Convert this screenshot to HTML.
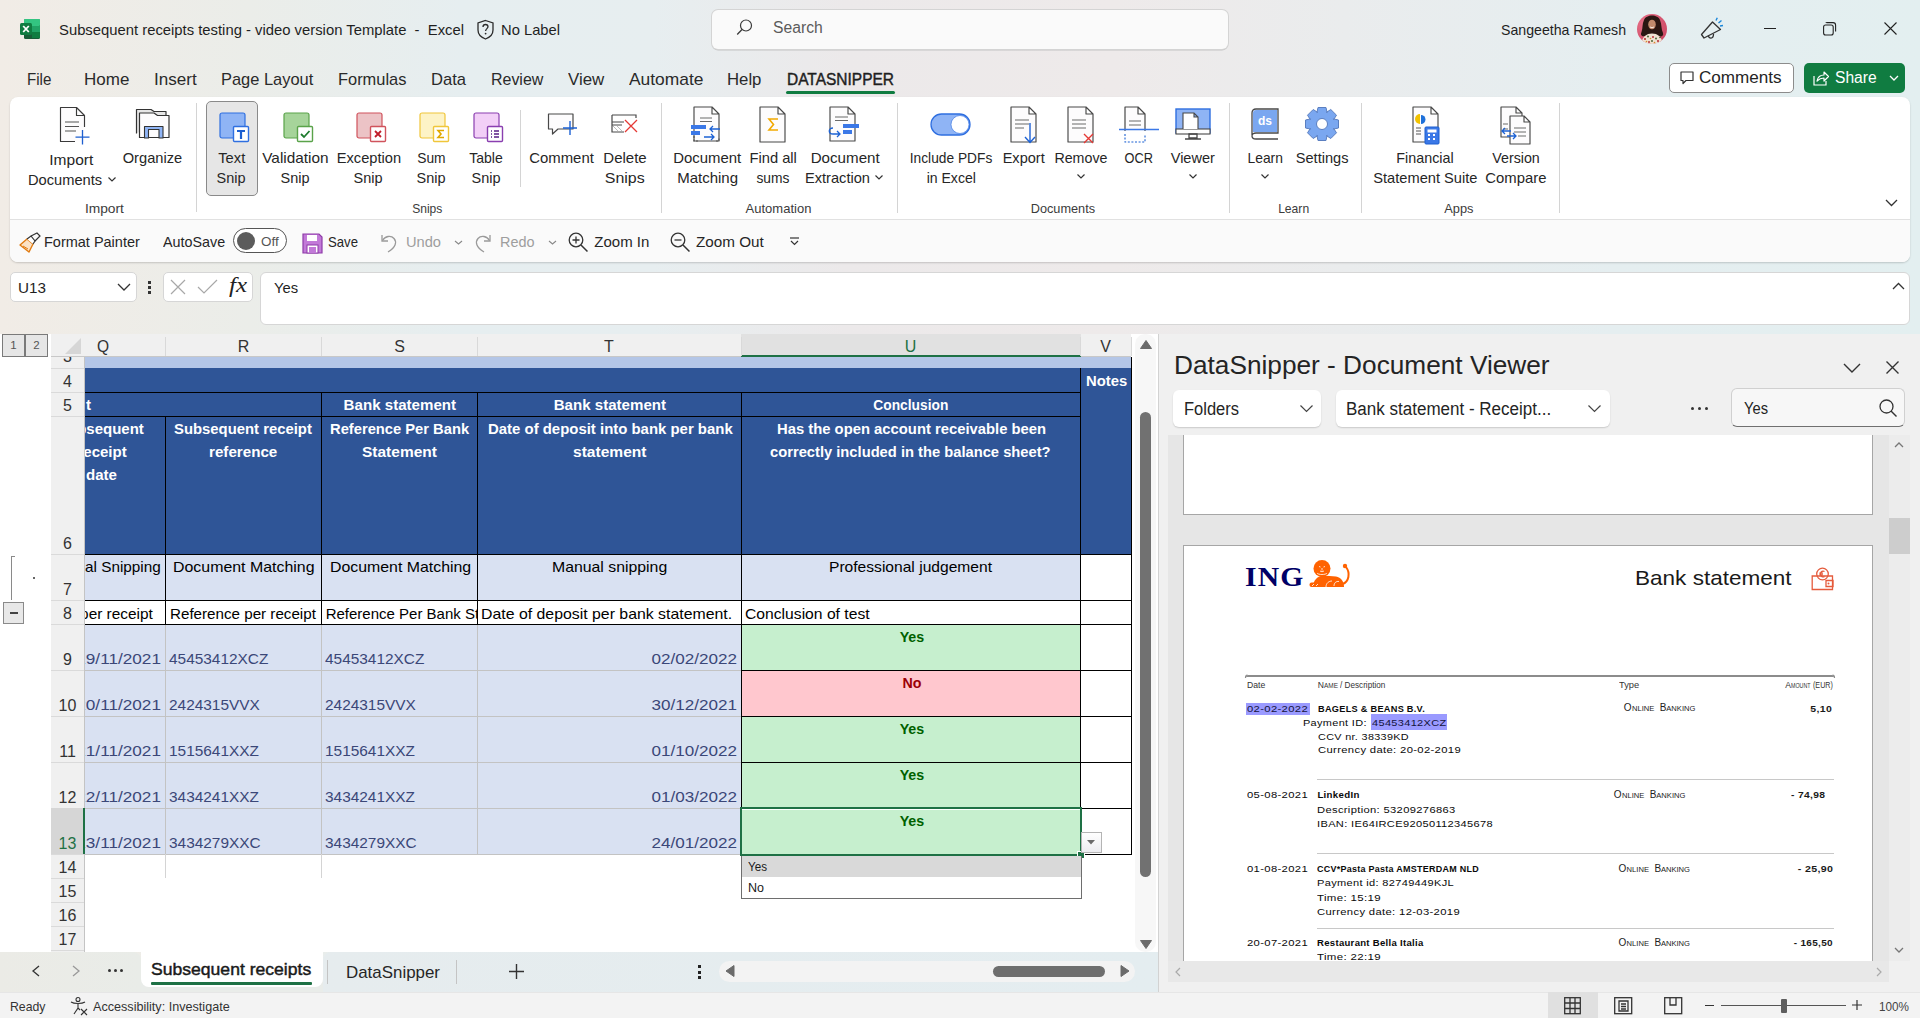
<!DOCTYPE html><html><head><meta charset="utf-8"><style>
html,body{margin:0;padding:0;width:1920px;height:1018px;overflow:hidden;background:#ebebeb;}
body{position:relative;font-family:"Liberation Sans",sans-serif;}
svg{overflow:visible}
</style></head><body>
<div style="position:absolute;left:0px;top:0px;width:1920px;height:1018px;background:linear-gradient(90deg,#f1ece6 0%,#ebede9 13%,#e6eef0 24%,#e7eef0 34%,#ece9ea 44%,#eeeaea 58%,#eaeced 70%,#e5eef0 84%,#e3eff0 100%);"></div>
<svg style="position:absolute;left:19px;top:18px;" width="23" height="23" viewBox="0 0 23 23">
<rect x="5" y="1" width="16" height="20" rx="1.5" fill="#185c37"/>
<rect x="5" y="1" width="16" height="7" rx="1" fill="#33c481"/>
<rect x="13" y="8" width="8" height="6" fill="#21a366"/>
<rect x="13" y="14" width="8" height="6" fill="#107c41"/>
<rect x="1" y="5" width="12" height="12" rx="1.5" fill="#107c41"/>
<path d="M4.2 8 L9.8 14 M9.8 8 L4.2 14" stroke="#fff" stroke-width="1.8"/>
</svg>
<div style="position:absolute;left:59.00px;top:22.30px;line-height:1;white-space:pre;color:#1f1f1f;font-family:'Liberation Sans', sans-serif;font-size:15px;font-weight:400;letter-spacing:0px;transform:scaleX(0.9880);transform-origin:left 0;">Subsequent receipts testing - video version Template  -  Excel</div>
<svg style="position:absolute;left:476px;top:19px;" width="19" height="21" viewBox="0 0 19 21"><path d="M9.5 1.5 L17 4 V11 C17 15.5 13.5 18.5 9.5 20 C5.5 18.5 2 15.5 2 11 V4 Z" fill="none" stroke="#2b2b2b" stroke-width="1.3"/>
<path d="M7 8 C7 6.3 8.2 5.5 9.5 5.5 C10.8 5.5 12 6.3 12 7.8 C12 9.5 9.6 9.8 9.6 12" fill="none" stroke="#2b2b2b" stroke-width="1.3"/><circle cx="9.6" cy="14.6" r="0.9" fill="#2b2b2b"/></svg>
<div style="position:absolute;left:500.50px;top:22.30px;line-height:1;white-space:pre;color:#1f1f1f;font-family:'Liberation Sans', sans-serif;font-size:15px;font-weight:400;letter-spacing:0px;transform:scaleX(0.9826);transform-origin:left 0;">No Label</div>
<div style="position:absolute;left:712px;top:10px;width:516px;height:39px;background:#fafafa;border-radius:6px;box-shadow:0 0 0 1px #d4d4d4, 0 1.5px 0 0 #c4c4c4;"></div>
<svg style="position:absolute;left:736px;top:19px;" width="16" height="19" viewBox="0 0 16 19"><circle cx="10" cy="6.5" r="5.5" fill="none" stroke="#3a3a3a" stroke-width="1.2"/><path d="M6 10.5 L1.2 15.5" stroke="#3a3a3a" stroke-width="1.3"/></svg>
<div style="position:absolute;left:772.70px;top:20.46px;line-height:1;white-space:pre;color:#5b5b5b;font-family:'Liberation Sans', sans-serif;font-size:16px;font-weight:400;letter-spacing:0px;transform:scaleX(0.9802);transform-origin:left 0;">Search</div>
<div style="position:absolute;left:1500.60px;top:22.30px;line-height:1;white-space:pre;color:#1f1f1f;font-family:'Liberation Sans', sans-serif;font-size:15px;font-weight:400;letter-spacing:0px;transform:scaleX(0.9427);transform-origin:left 0;">Sangeetha Ramesh</div>
<svg style="position:absolute;left:1637px;top:14px;" width="30" height="30" viewBox="0 0 30 30"><defs><clipPath id="av"><circle cx="15" cy="15" r="15"/></clipPath><radialGradient id="avbg" cx="0.3" cy="0.3" r="0.9"><stop offset="0" stop-color="#e8738a"/><stop offset="1" stop-color="#c9425e"/></radialGradient></defs>
<g clip-path="url(#av)"><rect width="30" height="30" fill="url(#avbg)"/>
<path d="M7 6 C9 0 21 0 23 6 C25 11 24 15 26 19 C27 22 24 23 22 22 L8 22 C5 23 3 21 4.5 18 C6 14 5 10 7 6Z" fill="#2a1712"/>
<ellipse cx="15" cy="10.5" rx="3.8" ry="4.8" fill="#c08a6c"/>
<path d="M13 13 Q15 14.5 17 13" stroke="#fff" stroke-width=".8" fill="none"/>
<path d="M4 31 C5 23 9 19.5 15 19.5 C21 19.5 25 23 26 31Z" fill="#efe3d2"/>
<g fill="#b8323a"><circle cx="8" cy="25" r="1.1"/><circle cx="16" cy="23" r="1"/><circle cx="21" cy="27" r="1.1"/><circle cx="12" cy="28" r="1"/></g>
<g fill="#3d5a2a"><circle cx="11" cy="22.5" r=".9"/><circle cx="19" cy="24.5" r=".9"/><circle cx="15" cy="27" r=".9"/><circle cx="23" cy="23.5" r=".8"/></g>
<g fill="#d98a2b"><circle cx="9.5" cy="27.5" r=".8"/><circle cx="17.5" cy="28.5" r=".8"/><circle cx="13.5" cy="24.5" r=".8"/></g>
</g></svg>
<svg style="position:absolute;left:1699px;top:17px;" width="26" height="24" viewBox="0 0 26 24"><path d="M2.5 17.5 L13.5 5 L21.5 12.5 L5 21 Z" fill="none" stroke="#333" stroke-width="1.3" stroke-linejoin="round"/>
<path d="M9.5 18.5 C9.5 22 14.5 22.5 14.5 17" fill="none" stroke="#333" stroke-width="1.3"/>
<path d="M17 3.5 L18.3 0.8 M19.5 6 L22.5 3.5 M21 9 L24 8.5" stroke="#1a86d9" stroke-width="1.4"/></svg>
<div style="position:absolute;left:1764px;top:28px;width:12px;height:1px;background:#222;"></div>
<svg style="position:absolute;left:1823px;top:22px;" width="14" height="14" viewBox="0 0 14 14"><rect x="0.6" y="3" width="9.6" height="10" rx="2" fill="none" stroke="#222" stroke-width="1.1"/><path d="M3 1 C3 0.8 3.3 0.6 4 0.6 H10 C11.8 0.6 12.6 1.6 12.6 3.2 V9.5" fill="none" stroke="#222" stroke-width="1.1"/></svg>
<svg style="position:absolute;left:1884px;top:22px;" width="13" height="13" viewBox="0 0 13 13"><path d="M0.5 0.5 L12.5 12.5 M12.5 0.5 L0.5 12.5" stroke="#222" stroke-width="1.1"/></svg>
<div style="position:absolute;left:27.30px;top:70.61px;line-height:1;white-space:pre;color:#2a2a2a;font-family:'Liberation Sans', sans-serif;font-size:17px;font-weight:400;letter-spacing:0px;transform:scaleX(0.8903);transform-origin:left 0;">File</div>
<div style="position:absolute;left:84.00px;top:70.61px;line-height:1;white-space:pre;color:#2a2a2a;font-family:'Liberation Sans', sans-serif;font-size:17px;font-weight:400;letter-spacing:0px;">Home</div>
<div style="position:absolute;left:154.00px;top:70.61px;line-height:1;white-space:pre;color:#2a2a2a;font-family:'Liberation Sans', sans-serif;font-size:17px;font-weight:400;letter-spacing:0px;transform:scaleX(1.0040);transform-origin:left 0;">Insert</div>
<div style="position:absolute;left:221.00px;top:70.61px;line-height:1;white-space:pre;color:#2a2a2a;font-family:'Liberation Sans', sans-serif;font-size:17px;font-weight:400;letter-spacing:0px;transform:scaleX(0.9668);transform-origin:left 0;">Page Layout</div>
<div style="position:absolute;left:338.30px;top:70.61px;line-height:1;white-space:pre;color:#2a2a2a;font-family:'Liberation Sans', sans-serif;font-size:17px;font-weight:400;letter-spacing:0px;transform:scaleX(0.9653);transform-origin:left 0;">Formulas</div>
<div style="position:absolute;left:431.00px;top:70.61px;line-height:1;white-space:pre;color:#2a2a2a;font-family:'Liberation Sans', sans-serif;font-size:17px;font-weight:400;letter-spacing:0px;transform:scaleX(0.9743);transform-origin:left 0;">Data</div>
<div style="position:absolute;left:491.00px;top:70.61px;line-height:1;white-space:pre;color:#2a2a2a;font-family:'Liberation Sans', sans-serif;font-size:17px;font-weight:400;letter-spacing:0px;transform:scaleX(0.9381);transform-origin:left 0;">Review</div>
<div style="position:absolute;left:567.70px;top:70.61px;line-height:1;white-space:pre;color:#2a2a2a;font-family:'Liberation Sans', sans-serif;font-size:17px;font-weight:400;letter-spacing:0px;transform:scaleX(0.9932);transform-origin:left 0;">View</div>
<div style="position:absolute;left:628.75px;top:70.61px;line-height:1;white-space:pre;color:#2a2a2a;font-family:'Liberation Sans', sans-serif;font-size:17px;font-weight:400;letter-spacing:0px;transform:scaleX(1.0231);transform-origin:left 0;">Automate</div>
<div style="position:absolute;left:727.30px;top:70.61px;line-height:1;white-space:pre;color:#2a2a2a;font-family:'Liberation Sans', sans-serif;font-size:17px;font-weight:400;letter-spacing:0px;transform:scaleX(0.9837);transform-origin:left 0;">Help</div>
<div style="position:absolute;left:786.50px;top:70.61px;line-height:1;white-space:pre;color:#1f1f1f;font-family:'Liberation Sans', sans-serif;font-size:17px;font-weight:400;letter-spacing:0px;-webkit-text-stroke:0.45px #1f1f1f;transform:scaleX(0.9110);transform-origin:left 0;">DATASNIPPER</div>
<div style="position:absolute;left:786px;top:91px;width:109px;height:3px;background:#107c41;border-radius:2px;"></div>
<div style="position:absolute;left:1669px;top:63px;width:125px;height:30px;box-sizing:border-box;border:1px solid #8c8c8c;border-radius:5px;background:#fff;"></div>
<svg style="position:absolute;left:1680px;top:71px;" width="14" height="14" viewBox="0 0 14 14"><path d="M1 1 H13 V9.5 H6 L3 12.5 V9.5 H1 Z" fill="none" stroke="#333" stroke-width="1.2" stroke-linejoin="round"/></svg>
<div style="position:absolute;left:1699.30px;top:70.46px;line-height:1;white-space:pre;color:#242424;font-family:'Liberation Sans', sans-serif;font-size:16px;font-weight:400;letter-spacing:0px;transform:scaleX(1.0677);transform-origin:left 0;">Comments</div>
<div style="position:absolute;left:1804px;top:63px;width:101px;height:30px;background:#107c41;border-radius:5px;"></div>
<svg style="position:absolute;left:1813px;top:70px;" width="16" height="16" viewBox="0 0 16 16"><path d="M1 6 V15 H13 V11" fill="none" stroke="#fff" stroke-width="1.2"/><path d="M4 11 C5 6 8 5 11 5 V2 L15.5 6.5 L11 11 V8 C8 8 6 9 4 11Z" fill="none" stroke="#fff" stroke-width="1.2" stroke-linejoin="round"/></svg>
<div style="position:absolute;left:1834.70px;top:70.46px;line-height:1;white-space:pre;color:#ffffff;font-family:'Liberation Sans', sans-serif;font-size:16px;font-weight:400;letter-spacing:0px;transform:scaleX(0.9765);transform-origin:left 0;">Share</div>
<svg style="position:absolute;left:1889px;top:75px;" width="10" height="6" viewBox="0 0 10 6"><path d="M1 1 L5 5 L9 1" fill="none" stroke="#fff" stroke-width="1.3"/></svg>
<div style="position:absolute;left:10px;top:97px;width:1900px;height:165px;background:#ffffff;border-radius:8px;box-shadow:0 1px 2px rgba(0,0,0,0.18);overflow:hidden;"></div>
<div style="position:absolute;left:10px;top:219px;width:1900px;height:43px;background:#fafafa;border-top:1px solid #e1e1e1;box-sizing:border-box;border-radius:0 0 8px 8px;"></div>
<div style="position:absolute;left:206px;top:101px;width:51.5px;height:95px;box-sizing:border-box;border:1px solid #8a8a8a;border-radius:5px;background:#e6e6e6;"></div>
<svg style="position:absolute;left:58px;top:106px;" width="34" height="40" viewBox="0 0 34 40"><path d="M2.5 1.5 H18.5 L26.5 9.5 V35.5 H2.5 Z" fill="#fdfcfd"/><path d="M17 35.5 H2.5 V1.5 H18.5 L26.5 9.5 V21 M18.5 1.5 V9.5 H26.5" fill="none" stroke="#3a3a3a" stroke-width="1.15" stroke-linejoin="round"/><path d="M7 16 H21 M7 20.5 H21 M7 25 H18" stroke="#555" stroke-width="1.2"/><path d="M24.5 24 V38.5 M17.5 31.2 H31.5" stroke="#1d5fd0" stroke-width="1.3"/></svg>
<div style="position:absolute;left:49.74px;top:152.30px;line-height:1;white-space:pre;color:#262626;font-family:'Liberation Sans', sans-serif;font-size:15px;font-weight:400;letter-spacing:0px;transform:scaleX(1.0349);transform-origin:center 0;">Import</div>
<div style="position:absolute;left:27.50px;top:171.80px;line-height:1;white-space:pre;color:#262626;font-family:'Liberation Sans', sans-serif;font-size:15px;font-weight:400;letter-spacing:0px;transform:scaleX(0.9779);transform-origin:left 0;">Documents</div>
<svg style="position:absolute;left:107.5px;top:177px;" width="8" height="5" viewBox="0 0 8 5"><path d="M0.5 0.5 L4 4 L7.5 0.5" fill="none" stroke="#333" stroke-width="1.2"/></svg>
<svg style="position:absolute;left:134px;top:107px;" width="38" height="34" viewBox="0 0 38 34"><path d="M2.5 26.5 V2.5 H17 L20 4.5 H32 V8" fill="#e6e6e6" stroke="#333" stroke-width="1.2" stroke-linejoin="round"/>
<path d="M5.5 30.5 V6 H20 L23.5 8.5 H35 V30.5 Z" fill="#fdfcfd" stroke="#333" stroke-width="1.2" stroke-linejoin="round"/>
<path d="M10.5 31 V19.5 H29 V31 H25 V22.5 H14.5 V31 Z" fill="#8fb4f5" stroke="#333" stroke-width="1.1" stroke-linejoin="round"/></svg>
<div style="position:absolute;left:122.31px;top:150.10px;line-height:1;white-space:pre;color:#262626;font-family:'Liberation Sans', sans-serif;font-size:15px;font-weight:400;letter-spacing:0px;transform:scaleX(0.9774);transform-origin:center 0;">Organize</div>
<svg style="position:absolute;left:218.5px;top:111.5px;" width="32" height="32" viewBox="0 0 32 32"><rect x="1" y="1" width="25" height="25" rx="2" fill="#8fb4f5" stroke="#2f6fe0" stroke-width="1.2"/><rect x="14.5" y="14.5" width="15" height="15" rx="1" fill="#fff" stroke="#2f6fe0" stroke-width="1.4"/><path d="M18 19 H26 M22 19 V27" stroke="#1d5fd0" stroke-width="2.2"/></svg>
<div style="position:absolute;left:217.74px;top:150.30px;line-height:1;white-space:pre;color:#262626;font-family:'Liberation Sans', sans-serif;font-size:15px;font-weight:400;letter-spacing:0px;transform:scaleX(0.9813);transform-origin:center 0;">Text</div>
<div style="position:absolute;left:216.48px;top:170.30px;line-height:1;white-space:pre;color:#262626;font-family:'Liberation Sans', sans-serif;font-size:15px;font-weight:400;letter-spacing:0px;transform:scaleX(0.9657);transform-origin:center 0;">Snip</div>
<svg style="position:absolute;left:282.5px;top:111.5px;" width="32" height="32" viewBox="0 0 32 32"><rect x="1" y="1" width="25" height="25" rx="2" fill="#a6d49a" stroke="#5aa34a" stroke-width="1.2"/><rect x="14.5" y="14.5" width="15" height="15" rx="1" fill="#fff" stroke="#5aa34a" stroke-width="1.4"/><path d="M18 22 L21 25 L26.5 19" fill="none" stroke="#1e7b2e" stroke-width="1.8"/></svg>
<div style="position:absolute;left:262.61px;top:150.30px;line-height:1;white-space:pre;color:#262626;font-family:'Liberation Sans', sans-serif;font-size:15px;font-weight:400;letter-spacing:0px;transform:scaleX(1.0234);transform-origin:center 0;">Validation</div>
<div style="position:absolute;left:279.98px;top:170.30px;line-height:1;white-space:pre;color:#262626;font-family:'Liberation Sans', sans-serif;font-size:15px;font-weight:400;letter-spacing:0px;transform:scaleX(0.9657);transform-origin:center 0;">Snip</div>
<svg style="position:absolute;left:356px;top:111.5px;" width="32" height="32" viewBox="0 0 32 32"><rect x="1" y="1" width="25" height="25" rx="2" fill="#ecc3c6" stroke="#d0535c" stroke-width="1.2"/><rect x="14.5" y="14.5" width="15" height="15" rx="1" fill="#fff" stroke="#d0535c" stroke-width="1.4"/><path d="M19 19 L25 25 M25 19 L19 25" stroke="#c11d2a" stroke-width="1.8"/></svg>
<div style="position:absolute;left:335.56px;top:150.30px;line-height:1;white-space:pre;color:#262626;font-family:'Liberation Sans', sans-serif;font-size:15px;font-weight:400;letter-spacing:0px;transform:scaleX(0.9761);transform-origin:center 0;">Exception</div>
<div style="position:absolute;left:353.48px;top:170.30px;line-height:1;white-space:pre;color:#262626;font-family:'Liberation Sans', sans-serif;font-size:15px;font-weight:400;letter-spacing:0px;transform:scaleX(0.9657);transform-origin:center 0;">Snip</div>
<svg style="position:absolute;left:419px;top:111.5px;" width="32" height="32" viewBox="0 0 32 32"><rect x="1" y="1" width="25" height="25" rx="2" fill="#fdf3c6" stroke="#f0c63a" stroke-width="1.2"/><rect x="14.5" y="14.5" width="15" height="15" rx="1" fill="#fff" stroke="#f0c63a" stroke-width="1.4"/><path d="M25 18.5 H19 L22 22 L19 25.5 H25" fill="none" stroke="#e0a800" stroke-width="1.6"/></svg>
<div style="position:absolute;left:415.58px;top:150.30px;line-height:1;white-space:pre;color:#262626;font-family:'Liberation Sans', sans-serif;font-size:15px;font-weight:400;letter-spacing:0px;transform:scaleX(0.9208);transform-origin:center 0;">Sum</div>
<div style="position:absolute;left:415.98px;top:170.30px;line-height:1;white-space:pre;color:#262626;font-family:'Liberation Sans', sans-serif;font-size:15px;font-weight:400;letter-spacing:0px;transform:scaleX(0.9657);transform-origin:center 0;">Snip</div>
<svg style="position:absolute;left:473px;top:111.5px;" width="32" height="32" viewBox="0 0 32 32"><rect x="1" y="1" width="25" height="25" rx="2" fill="#f2cff7" stroke="#8a3fb0" stroke-width="1.2"/><rect x="14.5" y="14.5" width="15" height="15" rx="1" fill="#fff" stroke="#8a3fb0" stroke-width="1.4"/><path d="M18 19 H19 M21 19 H26 M18 22 H19 M21 22 H26 M18 25 H19 M21 25 H26" stroke="#5a1f86" stroke-width="1.6"/></svg>
<div style="position:absolute;left:467.67px;top:150.30px;line-height:1;white-space:pre;color:#262626;font-family:'Liberation Sans', sans-serif;font-size:15px;font-weight:400;letter-spacing:0px;transform:scaleX(0.9370);transform-origin:center 0;">Table</div>
<div style="position:absolute;left:470.58px;top:170.30px;line-height:1;white-space:pre;color:#262626;font-family:'Liberation Sans', sans-serif;font-size:15px;font-weight:400;letter-spacing:0px;transform:scaleX(0.9657);transform-origin:center 0;">Snip</div>
<svg style="position:absolute;left:547px;top:112px;" width="32" height="26" viewBox="0 0 32 26"><path d="M1.5 2 H26 V17 H11 L5.5 22 V17 H1.5 Z" fill="#fdfcfd" stroke="#484848" stroke-width="1.2" stroke-linejoin="round"/><path d="M23 9 V23 M16 16 H30" stroke="#1d62d4" stroke-width="1.4"/></svg>
<div style="position:absolute;left:528.78px;top:150.10px;line-height:1;white-space:pre;color:#262626;font-family:'Liberation Sans', sans-serif;font-size:15px;font-weight:400;letter-spacing:0px;transform:scaleX(0.9934);transform-origin:center 0;">Comment</div>
<svg style="position:absolute;left:610px;top:113px;" width="30" height="22" viewBox="0 0 30 22"><path d="M2 2 H26 V5 M2 2 V19 H14 M2 9 H14 M2 12 H12" fill="none" stroke="#484848" stroke-width="1.2"/><path d="M3 13 L8 18 M7 13 L12 18" stroke="#bbb" stroke-width="1"/><path d="M15 7 L27 19 M27 7 L15 19" stroke="#e53935" stroke-width="1.3"/></svg>
<div style="position:absolute;left:603.32px;top:150.30px;line-height:1;white-space:pre;color:#262626;font-family:'Liberation Sans', sans-serif;font-size:15px;font-weight:400;letter-spacing:0px;">Delete</div>
<div style="position:absolute;left:606.23px;top:170.30px;line-height:1;white-space:pre;color:#262626;font-family:'Liberation Sans', sans-serif;font-size:15px;font-weight:400;letter-spacing:0px;transform:scaleX(1.0658);transform-origin:center 0;">Snips</div>
<div style="position:absolute;left:195.5px;top:103px;width:1px;height:109px;background:#d4d4d4;"></div>
<div style="position:absolute;left:519.5px;top:110px;width:1px;height:77px;background:#d4d4d4;"></div>
<div style="position:absolute;left:660.5px;top:103px;width:1px;height:110px;background:#d4d4d4;"></div>
<div style="position:absolute;left:896.5px;top:103px;width:1px;height:110px;background:#d4d4d4;"></div>
<div style="position:absolute;left:1228.5px;top:103px;width:1px;height:110px;background:#d4d4d4;"></div>
<div style="position:absolute;left:1360.5px;top:103px;width:1px;height:110px;background:#d4d4d4;"></div>
<div style="position:absolute;left:1558.5px;top:103px;width:1px;height:110px;background:#d4d4d4;"></div>
<svg style="position:absolute;left:690px;top:106px;" width="34" height="38" viewBox="0 0 34 38"><path d="M4 1 H22 L29 8 V35 H4 Z M22 1 V8 H29" fill="#fdfcfd" stroke="#484848" stroke-width="1.15" stroke-linejoin="round"/><path d="M10 12 H22 M10 15.5 H22" stroke="#6b6b6b" stroke-width="1.2"/><rect x="1" y="19" width="15" height="4" fill="#3b78e7"/><rect x="1" y="25" width="9" height="4" fill="#3b78e7"/><path d="M30 23 H20 M23 20 L20 23 L23 26 M14 31 H24 M21 28 L24 31 L21 34" fill="none" stroke="#1d62d4" stroke-width="1.3"/><path d="M4 30 V35 H9 M26 35 H29 V32" fill="none" stroke="#555" stroke-width="1.1" stroke-dasharray="2 1.5"/></svg>
<div style="position:absolute;left:673.41px;top:150.30px;line-height:1;white-space:pre;color:#262626;font-family:'Liberation Sans', sans-serif;font-size:15px;font-weight:400;letter-spacing:0px;transform:scaleX(0.9945);transform-origin:center 0;">Document</div>
<div style="position:absolute;left:677.16px;top:170.30px;line-height:1;white-space:pre;color:#262626;font-family:'Liberation Sans', sans-serif;font-size:15px;font-weight:400;letter-spacing:0px;">Matching</div>
<svg style="position:absolute;left:758px;top:106px;" width="30" height="38" viewBox="0 0 30 38"><path d="M2 1 H20 L27 8 V36 H2 Z M20 1 V8 H27" fill="#fdfcfd" stroke="#484848" stroke-width="1.15" stroke-linejoin="round"/><path d="M20 13 H11 L15.5 18.5 L11 24 H20" fill="none" stroke="#f2a900" stroke-width="1.6"/></svg>
<div style="position:absolute;left:748.82px;top:150.30px;line-height:1;white-space:pre;color:#262626;font-family:'Liberation Sans', sans-serif;font-size:15px;font-weight:400;letter-spacing:0px;transform:scaleX(0.9802);transform-origin:center 0;">Find all</div>
<div style="position:absolute;left:755.08px;top:170.30px;line-height:1;white-space:pre;color:#262626;font-family:'Liberation Sans', sans-serif;font-size:15px;font-weight:400;letter-spacing:0px;transform:scaleX(0.9207);transform-origin:center 0;">sums</div>
<svg style="position:absolute;left:828px;top:106px;" width="34" height="38" viewBox="0 0 34 38"><path d="M2 1 H20 L27 8 V35 H2 Z M20 1 V8 H27" fill="#fdfcfd" stroke="#484848" stroke-width="1.15" stroke-linejoin="round"/><path d="M7 11 H20 M7 14.5 H20" stroke="#6b6b6b" stroke-width="1.2"/><rect x="15" y="18" width="16" height="4" fill="#3b78e7"/><rect x="15" y="24" width="9" height="4" fill="#3b78e7"/><path d="M5 22 C0 22 0 28 5 28 H12 M9 25 L12 28 L9 31" fill="none" stroke="#1d62d4" stroke-width="1.3"/></svg>
<div style="position:absolute;left:810.61px;top:150.30px;line-height:1;white-space:pre;color:#262626;font-family:'Liberation Sans', sans-serif;font-size:15px;font-weight:400;letter-spacing:0px;transform:scaleX(1.0091);transform-origin:center 0;">Document</div>
<div style="position:absolute;left:804.60px;top:170.30px;line-height:1;white-space:pre;color:#262626;font-family:'Liberation Sans', sans-serif;font-size:15px;font-weight:400;letter-spacing:0px;transform:scaleX(0.9745);transform-origin:left 0;">Extraction</div>
<svg style="position:absolute;left:874.5px;top:174.5px;" width="8" height="5" viewBox="0 0 8 5"><path d="M0.5 0.5 L4 4 L7.5 0.5" fill="none" stroke="#333" stroke-width="1.2"/></svg>
<svg style="position:absolute;left:930px;top:113px;" width="42" height="24" viewBox="0 0 42 24"><rect x="1" y="1" width="39" height="21" rx="10.5" fill="#8fb4f5" stroke="#2f6fe0" stroke-width="1.3"/><circle cx="30" cy="11.5" r="9" fill="#fff" stroke="#2f6fe0" stroke-width="0.6"/></svg>
<div style="position:absolute;left:905.78px;top:150.30px;line-height:1;white-space:pre;color:#262626;font-family:'Liberation Sans', sans-serif;font-size:15px;font-weight:400;letter-spacing:0px;transform:scaleX(0.9162);transform-origin:center 0;">Include PDFs</div>
<div style="position:absolute;left:924.53px;top:170.30px;line-height:1;white-space:pre;color:#262626;font-family:'Liberation Sans', sans-serif;font-size:15px;font-weight:400;letter-spacing:0px;transform:scaleX(0.9366);transform-origin:center 0;">in Excel</div>
<svg style="position:absolute;left:1009px;top:106px;" width="32" height="40" viewBox="0 0 32 40"><path d="M2 1 H20 L27 8 V36 H2 Z M20 1 V8 H27" fill="#fdfcfd" stroke="#484848" stroke-width="1.15" stroke-linejoin="round"/><path d="M6 14 H20 M6 18 H20 M6 22 H15" stroke="#6b6b6b" stroke-width="1.2"/><path d="M21 17 V36 M16 31 L21 36.5 L26 31" fill="none" stroke="#1d62d4" stroke-width="1.4"/></svg>
<div style="position:absolute;left:1001.92px;top:150.10px;line-height:1;white-space:pre;color:#262626;font-family:'Liberation Sans', sans-serif;font-size:15px;font-weight:400;letter-spacing:0px;transform:scaleX(0.9686);transform-origin:center 0;">Export</div>
<svg style="position:absolute;left:1066px;top:106px;" width="32" height="40" viewBox="0 0 32 40"><path d="M2 1 H20 L27 8 V36 H2 Z M20 1 V8 H27" fill="#fdfcfd" stroke="#484848" stroke-width="1.15" stroke-linejoin="round"/><path d="M6 14 H20 M6 18 H20 M6 22 H20" stroke="#6b6b6b" stroke-width="1.2"/><path d="M18 28 L27 37 M27 28 L18 37" stroke="#e53935" stroke-width="1.4"/></svg>
<div style="position:absolute;left:1053.07px;top:150.10px;line-height:1;white-space:pre;color:#262626;font-family:'Liberation Sans', sans-serif;font-size:15px;font-weight:400;letter-spacing:0px;transform:scaleX(0.9488);transform-origin:center 0;">Remove</div>
<svg style="position:absolute;left:1117px;top:106px;" width="44" height="40" viewBox="0 0 44 40"><path d="M8 25 V1 H21 L28 8 V25 M21 1 V8 H28" fill="#fdfcfd" stroke="#484848" stroke-width="1.2" stroke-linejoin="round"/><path d="M12 15 H24 M12 19 H24" stroke="#6b6b6b" stroke-width="1.2"/><path d="M2 23.5 H42" stroke="#3b78e7" stroke-width="1.3"/><path d="M8 28 V36 H28 V28" fill="none" stroke="#1d62d4" stroke-width="1.1" stroke-dasharray="2 1.6"/></svg>
<div style="position:absolute;left:1121.83px;top:150.10px;line-height:1;white-space:pre;color:#262626;font-family:'Liberation Sans', sans-serif;font-size:15px;font-weight:400;letter-spacing:0px;transform:scaleX(0.8517);transform-origin:center 0;">OCR</div>
<svg style="position:absolute;left:1175px;top:108px;" width="36" height="34" viewBox="0 0 36 34"><rect x="1" y="1" width="34" height="24" fill="#8fb4f5" stroke="#2f6fe0" stroke-width="1.4"/><rect x="1" y="21" width="34" height="5" fill="#fff" stroke="#484848" stroke-width="1.1"/><path d="M14 30 H22 V26 H14Z M10 31 H26" fill="none" stroke="#484848" stroke-width="1.3"/><path d="M8 21 V5 H19 L23 9 V21 M19 5 V9 H23" fill="#fff" stroke="#484848" stroke-width="1.1"/></svg>
<div style="position:absolute;left:1169.70px;top:150.10px;line-height:1;white-space:pre;color:#262626;font-family:'Liberation Sans', sans-serif;font-size:15px;font-weight:400;letter-spacing:0px;transform:scaleX(0.9694);transform-origin:center 0;">Viewer</div>
<svg style="position:absolute;left:1249px;top:108px;" width="33" height="34" viewBox="0 0 33 34"><path d="M3 27 V5 C3 2.5 4.5 1 7 1 H29 V25 H7 C4.5 25 3 26 3 28 C3 30 4.5 31 7 31 H29" fill="none" stroke="#484848" stroke-width="1.3"/><path d="M4 24 V5 C4 3 5 2 7 2 H28 V24 Z" fill="#7aa7f0"/><text x="16" y="17" font-family="Liberation Sans" font-weight="700" font-size="12" fill="#fff" text-anchor="middle">ds</text></svg>
<div style="position:absolute;left:1245.81px;top:150.10px;line-height:1;white-space:pre;color:#262626;font-family:'Liberation Sans', sans-serif;font-size:15px;font-weight:400;letter-spacing:0px;transform:scaleX(0.9225);transform-origin:center 0;">Learn</div>
<svg style="position:absolute;left:1076.5px;top:174px;" width="8" height="5" viewBox="0 0 8 5"><path d="M0.5 0.5 L4 4 L7.5 0.5" fill="none" stroke="#333" stroke-width="1.2"/></svg>
<svg style="position:absolute;left:1188.5px;top:174px;" width="8" height="5" viewBox="0 0 8 5"><path d="M0.5 0.5 L4 4 L7.5 0.5" fill="none" stroke="#333" stroke-width="1.2"/></svg>
<svg style="position:absolute;left:1260.5px;top:174px;" width="8" height="5" viewBox="0 0 8 5"><path d="M0.5 0.5 L4 4 L7.5 0.5" fill="none" stroke="#333" stroke-width="1.2"/></svg>
<svg style="position:absolute;left:1305px;top:107px;" width="34" height="35" viewBox="0 0 34 35"><path d="M33.5 13.0 L33.5 21.0 L28.4 22.1 L28.7 21.5 L31.5 25.8 L25.8 31.5 L21.5 28.7 L22.1 28.4 L21.0 33.5 L13.0 33.5 L11.9 28.4 L12.5 28.7 L8.2 31.5 L2.5 25.8 L5.3 21.5 L5.6 22.1 L0.5 21.0 L0.5 13.0 L5.6 11.9 L5.3 12.5 L2.5 8.2 L8.2 2.5 L12.5 5.3 L11.9 5.6 L13.0 0.5 L21.0 0.5 L22.1 5.6 L21.5 5.3 L25.8 2.5 L31.5 8.2 L28.7 12.5 L28.4 11.9Z" fill="#7aa7f0" stroke="#5b7fc0" stroke-width="1" stroke-linejoin="round"/><circle cx="17" cy="17" r="5.5" fill="#fff" stroke="#5b7fc0" stroke-width="1"/></svg>
<div style="position:absolute;left:1294.60px;top:150.10px;line-height:1;white-space:pre;color:#262626;font-family:'Liberation Sans', sans-serif;font-size:15px;font-weight:400;letter-spacing:0px;transform:scaleX(0.9723);transform-origin:center 0;">Settings</div>
<svg style="position:absolute;left:1411px;top:106px;" width="32" height="40" viewBox="0 0 32 40"><path d="M2 1 H20 L27 8 V36 H2 Z M20 1 V8 H27" fill="#fdfcfd" stroke="#484848" stroke-width="1.15" stroke-linejoin="round"/><path d="M9 8 A5 5 0 0 0 9 18 L9 13 Z" fill="#f2c200"/><path d="M10 9 A4.5 4.5 0 1 1 10 18 Z" fill="#1d6fd9"/><path d="M5 22 H10 M5 25 H10 M5 28 H10" stroke="#555" stroke-width="1"/><rect x="14" y="21" width="14" height="17" rx="1" fill="#3b78e7" stroke="#1d5fd0"/><rect x="16.5" y="23.5" width="9" height="3" fill="#fff"/><path d="M17 29 H19 M22 29 H24 M17 33 H19 M22 33 H24" stroke="#fff" stroke-width="1.8"/></svg>
<div style="position:absolute;left:1395.48px;top:150.30px;line-height:1;white-space:pre;color:#262626;font-family:'Liberation Sans', sans-serif;font-size:15px;font-weight:400;letter-spacing:0px;transform:scaleX(0.9545);transform-origin:center 0;">Financial</div>
<div style="position:absolute;left:1372.13px;top:170.30px;line-height:1;white-space:pre;color:#262626;font-family:'Liberation Sans', sans-serif;font-size:15px;font-weight:400;letter-spacing:0px;transform:scaleX(0.9763);transform-origin:center 0;">Statement Suite</div>
<svg style="position:absolute;left:1499px;top:106px;" width="34" height="40" viewBox="0 0 34 40"><path d="M2 1 H17 L23 7 V31 H2 Z M17 1 V7 H23" fill="#fdfcfd" stroke="#484848" stroke-width="1.15" stroke-linejoin="round"/><path d="M11 10 H25 L31 16 V38 H11 Z M25 10 V16 H31" fill="#fdfcfd" stroke="#484848" stroke-width="1.15" stroke-linejoin="round"/><path d="M15 22 H27 M15 26 H27 M19 30 H27 M4 18 H9 M4 23 H9" stroke="#6b6b6b" stroke-width="1.1"/><path d="M12 25 H3 M6 22 L3 25 L6 28 M8 30 H17 M14 27 L17 30 L14 33" fill="none" stroke="#1d62d4" stroke-width="1.3"/></svg>
<div style="position:absolute;left:1490.98px;top:150.30px;line-height:1;white-space:pre;color:#262626;font-family:'Liberation Sans', sans-serif;font-size:15px;font-weight:400;letter-spacing:0px;transform:scaleX(0.9491);transform-origin:center 0;">Version</div>
<div style="position:absolute;left:1485.15px;top:170.30px;line-height:1;white-space:pre;color:#262626;font-family:'Liberation Sans', sans-serif;font-size:15px;font-weight:400;letter-spacing:0px;transform:scaleX(0.9902);transform-origin:center 0;">Compare</div>
<div style="position:absolute;left:86.08px;top:202.00px;line-height:1;white-space:pre;color:#3b3b3b;font-family:'Liberation Sans', sans-serif;font-size:13px;font-weight:400;letter-spacing:0px;transform:scaleX(1.0585);transform-origin:center 0;">Import</div>
<div style="position:absolute;left:410.73px;top:202.00px;line-height:1;white-space:pre;color:#3b3b3b;font-family:'Liberation Sans', sans-serif;font-size:13px;font-weight:400;letter-spacing:0px;transform:scaleX(0.9283);transform-origin:center 0;">Snips</div>
<div style="position:absolute;left:745.62px;top:202.00px;line-height:1;white-space:pre;color:#3b3b3b;font-family:'Liberation Sans', sans-serif;font-size:13px;font-weight:400;letter-spacing:0px;">Automation</div>
<div style="position:absolute;left:1029.72px;top:202.00px;line-height:1;white-space:pre;color:#3b3b3b;font-family:'Liberation Sans', sans-serif;font-size:13px;font-weight:400;letter-spacing:0px;transform:scaleX(0.9779);transform-origin:center 0;">Documents</div>
<div style="position:absolute;left:1277.38px;top:202.00px;line-height:1;white-space:pre;color:#3b3b3b;font-family:'Liberation Sans', sans-serif;font-size:13px;font-weight:400;letter-spacing:0px;transform:scaleX(0.9323);transform-origin:center 0;">Learn</div>
<div style="position:absolute;left:1443.68px;top:202.00px;line-height:1;white-space:pre;color:#3b3b3b;font-family:'Liberation Sans', sans-serif;font-size:13px;font-weight:400;letter-spacing:0px;transform:scaleX(0.9851);transform-origin:center 0;">Apps</div>
<svg style="position:absolute;left:1885px;top:199px;" width="13" height="8" viewBox="0 0 13 8"><path d="M1 1 L6.5 6.5 L12 1" fill="none" stroke="#333" stroke-width="1.3"/></svg>
<svg style="position:absolute;left:18px;top:232px;" width="23" height="21" viewBox="0 0 23 21"><path d="M2 13 L11 20 L15 12 L9 7 Z" fill="#fbe2c6" stroke="#e07a10" stroke-width="1.4" stroke-linejoin="round"/><path d="M9 7 L13 4 L17 9 L15 12" fill="#fff" stroke="#333" stroke-width="1.2"/><path d="M13 4 L19 1 L22 4 L17 9" fill="none" stroke="#333" stroke-width="1.2"/><path d="M5 14 L10 17" stroke="#e07a10" stroke-width="1"/></svg>
<div style="position:absolute;left:44.40px;top:234.30px;line-height:1;white-space:pre;color:#262626;font-family:'Liberation Sans', sans-serif;font-size:15px;font-weight:400;letter-spacing:0px;transform:scaleX(0.9657);transform-origin:left 0;">Format Painter</div>
<div style="position:absolute;left:162.50px;top:234.30px;line-height:1;white-space:pre;color:#262626;font-family:'Liberation Sans', sans-serif;font-size:15px;font-weight:400;letter-spacing:0px;transform:scaleX(0.9547);transform-origin:left 0;">AutoSave</div>
<div style="position:absolute;left:233px;top:228px;width:53.7px;height:25px;box-sizing:border-box;border:1px solid #555;border-radius:12.5px;background:#fff;"></div>
<div style="position:absolute;left:237px;top:231.5px;width:18px;height:18px;border-radius:9px;background:#5c5c5c;"></div>
<div style="position:absolute;left:261.00px;top:235.00px;line-height:1;white-space:pre;color:#555;font-family:'Liberation Sans', sans-serif;font-size:13px;font-weight:400;letter-spacing:0px;transform:scaleX(1.0345);transform-origin:left 0;">Off</div>
<svg style="position:absolute;left:302px;top:233px;" width="21" height="21" viewBox="0 0 21 21"><path d="M1 1 H17 L20 4 V20 H1 Z" fill="#c27ad8" stroke="#8e3ba8" stroke-width="1.2"/><rect x="5" y="2" width="10" height="6" fill="#fff"/><rect x="5" y="12" width="11" height="8" fill="#fff" stroke="#8e3ba8" stroke-width="1"/><rect x="7" y="14" width="7" height="6" fill="#c27ad8"/></svg>
<div style="position:absolute;left:328.00px;top:234.30px;line-height:1;white-space:pre;color:#262626;font-family:'Liberation Sans', sans-serif;font-size:15px;font-weight:400;letter-spacing:0px;transform:scaleX(0.8771);transform-origin:left 0;">Save</div>
<svg style="position:absolute;left:378px;top:232px;" width="20" height="22" viewBox="0 0 20 22"><path d="M4 3 V9 H10" fill="none" stroke="#9a9a9a" stroke-width="1.3"/><path d="M4.5 8.5 C7 4 13 3 16 6.5 C19 10 18 15 10 20" fill="none" stroke="#9a9a9a" stroke-width="1.3"/></svg>
<div style="position:absolute;left:405.50px;top:234.30px;line-height:1;white-space:pre;color:#9e9e9e;font-family:'Liberation Sans', sans-serif;font-size:15px;font-weight:400;letter-spacing:0px;transform:scaleX(0.9760);transform-origin:left 0;">Undo</div>
<svg style="position:absolute;left:454px;top:240px;" width="9" height="5" viewBox="0 0 9 5"><path d="M1 1 L4.5 4 L8 1" fill="none" stroke="#888" stroke-width="1.1"/></svg>
<svg style="position:absolute;left:474px;top:232px;" width="20" height="22" viewBox="0 0 20 22"><path d="M16 3 V9 H10" fill="none" stroke="#9a9a9a" stroke-width="1.3"/><path d="M15.5 8.5 C13 4 7 3 4 6.5 C1 10 2 15 10 20" fill="none" stroke="#9a9a9a" stroke-width="1.3"/></svg>
<div style="position:absolute;left:500.00px;top:234.30px;line-height:1;white-space:pre;color:#9e9e9e;font-family:'Liberation Sans', sans-serif;font-size:15px;font-weight:400;letter-spacing:0px;transform:scaleX(0.9621);transform-origin:left 0;">Redo</div>
<svg style="position:absolute;left:548px;top:240px;" width="9" height="5" viewBox="0 0 9 5"><path d="M1 1 L4.5 4 L8 1" fill="none" stroke="#888" stroke-width="1.1"/></svg>
<svg style="position:absolute;left:568px;top:232px;" width="21" height="21" viewBox="0 0 21 21"><circle cx="8" cy="8" r="6.8" fill="none" stroke="#333" stroke-width="1.3"/><path d="M13 13 L19.5 19.5" stroke="#333" stroke-width="1.5"/><path d="M8 4.5 V11.5 M4.5 8 H11.5" stroke="#333" stroke-width="1.3"/></svg>
<div style="position:absolute;left:594.30px;top:234.30px;line-height:1;white-space:pre;color:#262626;font-family:'Liberation Sans', sans-serif;font-size:15px;font-weight:400;letter-spacing:0px;">Zoom In</div>
<svg style="position:absolute;left:670px;top:232px;" width="21" height="21" viewBox="0 0 21 21"><circle cx="8" cy="8" r="6.8" fill="none" stroke="#333" stroke-width="1.3"/><path d="M13 13 L19.5 19.5" stroke="#333" stroke-width="1.5"/><path d="M4.5 8 H11.5" stroke="#333" stroke-width="1.3"/></svg>
<div style="position:absolute;left:695.80px;top:234.30px;line-height:1;white-space:pre;color:#262626;font-family:'Liberation Sans', sans-serif;font-size:15px;font-weight:400;letter-spacing:0px;transform:scaleX(1.0167);transform-origin:left 0;">Zoom Out</div>
<svg style="position:absolute;left:789px;top:237px;" width="11" height="9" viewBox="0 0 11 9"><path d="M1 1 H10" stroke="#333" stroke-width="1.2"/><path d="M2 4 L5.5 7.5 L9 4" fill="none" stroke="#333" stroke-width="1.2"/></svg>
<div style="position:absolute;left:10px;top:272px;width:127px;height:30px;box-sizing:border-box;border:1px solid #d6d6d6;border-radius:5px;background:#fff;"></div>
<div style="position:absolute;left:18.00px;top:280.30px;line-height:1;white-space:pre;color:#1f1f1f;font-family:'Liberation Sans', sans-serif;font-size:15px;font-weight:400;letter-spacing:0px;transform:scaleX(1.0170);transform-origin:left 0;">U13</div>
<svg style="position:absolute;left:117px;top:283px;" width="14" height="8" viewBox="0 0 14 8"><path d="M1 1 L7 7 L13 1" fill="none" stroke="#333" stroke-width="1.3"/></svg>
<div style="position:absolute;left:148px;top:281px;width:3px;height:3px;background:#333;"></div>
<div style="position:absolute;left:148px;top:286px;width:3px;height:3px;background:#333;"></div>
<div style="position:absolute;left:148px;top:291px;width:3px;height:3px;background:#333;"></div>
<div style="position:absolute;left:162.5px;top:272px;width:90.5px;height:30px;box-sizing:border-box;border:1px solid #d6d6d6;border-radius:5px;background:#fff;"></div>
<svg style="position:absolute;left:170px;top:279px;" width="16" height="16" viewBox="0 0 16 16"><path d="M1 1 L15 15 M15 1 L1 15" stroke="#a8a8a8" stroke-width="1.2"/></svg>
<svg style="position:absolute;left:197px;top:279px;" width="22" height="15" viewBox="0 0 22 15"><path d="M1 8 L7 14 L20 1" fill="none" stroke="#a8a8a8" stroke-width="1.2"/></svg>
<div style="position:absolute;left:229.00px;top:275.41px;line-height:1;white-space:pre;color:#222;font-family:'Liberation Serif', serif;font-size:21px;font-weight:400;letter-spacing:0px;font-style:italic;transform:scaleX(1.1876);transform-origin:left 0;">fx</div>
<div style="position:absolute;left:260px;top:272px;width:1650px;height:53px;box-sizing:border-box;border:1px solid #d6d6d6;border-radius:6px;background:#fff;"></div>
<div style="position:absolute;left:273.50px;top:280.00px;line-height:1;white-space:pre;color:#1f1f1f;font-family:'Liberation Sans', sans-serif;font-size:15px;font-weight:400;letter-spacing:0px;transform:scaleX(0.9884);transform-origin:left 0;">Yes</div>
<svg style="position:absolute;left:1892px;top:282px;" width="13" height="8" viewBox="0 0 13 8"><path d="M1 7 L6.5 1.5 L12 7" fill="none" stroke="#333" stroke-width="1.3"/></svg>
<div style="position:absolute;left:0px;top:334px;width:1158px;height:618px;background:#ffffff;"></div>
<div style="position:absolute;left:2px;top:334px;width:23px;height:23px;box-sizing:border-box;border:1px solid #7a7a7a;background:#e6e6e6;"></div>
<div style="position:absolute;left:25px;top:334px;width:23px;height:23px;box-sizing:border-box;border:1px solid #7a7a7a;background:#e6e6e6;"></div>
<div style="position:absolute;left:10.30px;top:340.27px;line-height:1;white-space:pre;color:#555;font-family:'Liberation Sans', sans-serif;font-size:11.5px;font-weight:400;letter-spacing:0px;">1</div>
<div style="position:absolute;left:33.30px;top:340.27px;line-height:1;white-space:pre;color:#555;font-family:'Liberation Sans', sans-serif;font-size:11.5px;font-weight:400;letter-spacing:0px;">2</div>
<div style="position:absolute;left:11px;top:556px;width:1px;height:44px;background:#8a8a8a;"></div>
<div style="position:absolute;left:11px;top:556px;width:4px;height:1px;background:#8a8a8a;"></div>
<div style="position:absolute;left:33px;top:577px;width:1.5px;height:1.5px;background:#666;"></div>
<div style="position:absolute;left:3px;top:601.5px;width:21px;height:22px;box-sizing:border-box;border:1px solid #8a8a8a;background:#e8e8e8;"></div>
<div style="position:absolute;left:10px;top:612px;width:8px;height:1.5px;background:#444;"></div>
<div style="position:absolute;left:51px;top:334px;width:1080px;height:23px;background:#f0f0f0;"></div>
<div style="position:absolute;left:741px;top:334px;width:339.5px;height:23px;background:#e1e1e1;"></div>
<div style="position:absolute;left:51px;top:356px;width:1080px;height:1px;background:#c8c8c8;"></div>
<div style="position:absolute;left:741px;top:355px;width:339.5px;height:2px;background:#1e7145;"></div>
<svg style="position:absolute;left:65px;top:338px;" width="17" height="17" viewBox="0 0 17 17"><path d="M16 0 V16 H0 Z" fill="#d6d6d6"/></svg>
<div style="position:absolute;left:165px;top:337px;width:1px;height:19px;background:#d9d9d9;"></div>
<div style="position:absolute;left:321px;top:337px;width:1px;height:19px;background:#d9d9d9;"></div>
<div style="position:absolute;left:477px;top:337px;width:1px;height:19px;background:#d9d9d9;"></div>
<div style="position:absolute;left:741px;top:337px;width:1px;height:19px;background:#d9d9d9;"></div>
<div style="position:absolute;left:1080px;top:337px;width:1px;height:19px;background:#d9d9d9;"></div>
<div style="position:absolute;left:1131px;top:337px;width:1px;height:19px;background:#d9d9d9;"></div>
<div style="position:absolute;left:96.60px;top:339.46px;line-height:1;white-space:pre;color:#333;font-family:'Liberation Sans', sans-serif;font-size:16px;font-weight:400;letter-spacing:0px;transform:scaleX(0.9716);transform-origin:left 0;">Q</div>
<div style="position:absolute;left:237.72px;top:339.46px;line-height:1;white-space:pre;color:#333;font-family:'Liberation Sans', sans-serif;font-size:16px;font-weight:400;letter-spacing:0px;">R</div>
<div style="position:absolute;left:394.16px;top:339.46px;line-height:1;white-space:pre;color:#333;font-family:'Liberation Sans', sans-serif;font-size:16px;font-weight:400;letter-spacing:0px;">S</div>
<div style="position:absolute;left:604.11px;top:339.46px;line-height:1;white-space:pre;color:#333;font-family:'Liberation Sans', sans-serif;font-size:16px;font-weight:400;letter-spacing:0px;">T</div>
<div style="position:absolute;left:1100.16px;top:339.46px;line-height:1;white-space:pre;color:#333;font-family:'Liberation Sans', sans-serif;font-size:16px;font-weight:400;letter-spacing:0px;">V</div>
<div style="position:absolute;left:904.72px;top:339.46px;line-height:1;white-space:pre;color:#1e7145;font-family:'Liberation Sans', sans-serif;font-size:16px;font-weight:400;letter-spacing:0px;">U</div>
<div style="position:absolute;left:51px;top:357px;width:33px;height:595px;background:#f0f0f0;"></div>
<div style="position:absolute;left:84px;top:357px;width:1px;height:595px;background:#c4c4c4;"></div>
<div style="position:absolute;left:51px;top:368px;width:33px;height:1px;background:#dadada;"></div>
<div style="position:absolute;left:51px;top:392px;width:33px;height:1px;background:#dadada;"></div>
<div style="position:absolute;left:51px;top:416px;width:33px;height:1px;background:#dadada;"></div>
<div style="position:absolute;left:51px;top:554px;width:33px;height:1px;background:#dadada;"></div>
<div style="position:absolute;left:51px;top:600px;width:33px;height:1px;background:#dadada;"></div>
<div style="position:absolute;left:51px;top:624px;width:33px;height:1px;background:#dadada;"></div>
<div style="position:absolute;left:51px;top:670px;width:33px;height:1px;background:#dadada;"></div>
<div style="position:absolute;left:51px;top:716px;width:33px;height:1px;background:#dadada;"></div>
<div style="position:absolute;left:51px;top:762px;width:33px;height:1px;background:#dadada;"></div>
<div style="position:absolute;left:51px;top:808px;width:33px;height:1px;background:#dadada;"></div>
<div style="position:absolute;left:51px;top:854px;width:33px;height:1px;background:#dadada;"></div>
<div style="position:absolute;left:51px;top:878px;width:33px;height:1px;background:#dadada;"></div>
<div style="position:absolute;left:51px;top:902px;width:33px;height:1px;background:#dadada;"></div>
<div style="position:absolute;left:51px;top:926px;width:33px;height:1px;background:#dadada;"></div>
<div style="position:absolute;left:51px;top:950px;width:33px;height:1px;background:#dadada;"></div>
<div style="position:absolute;left:51px;top:808px;width:33px;height:46px;background:#d6d6d6;"></div>
<div style="position:absolute;left:83px;top:808px;width:2px;height:46px;background:#1e7145;"></div>
<div style="position:absolute;left:51px;top:357px;width:33px;height:11px;overflow:hidden;">
<div style="position:absolute;left:12.05px;top:-7.54px;line-height:1;white-space:pre;color:#333;font-family:'Liberation Sans', sans-serif;font-size:16px;font-weight:400;letter-spacing:0px;">3</div>
</div>
<div style="position:absolute;left:63.05px;top:373.86px;line-height:1;white-space:pre;color:#333;font-family:'Liberation Sans', sans-serif;font-size:16px;font-weight:400;letter-spacing:0px;">4</div>
<div style="position:absolute;left:63.05px;top:397.86px;line-height:1;white-space:pre;color:#333;font-family:'Liberation Sans', sans-serif;font-size:16px;font-weight:400;letter-spacing:0px;">5</div>
<div style="position:absolute;left:63.05px;top:535.86px;line-height:1;white-space:pre;color:#333;font-family:'Liberation Sans', sans-serif;font-size:16px;font-weight:400;letter-spacing:0px;">6</div>
<div style="position:absolute;left:63.05px;top:581.86px;line-height:1;white-space:pre;color:#333;font-family:'Liberation Sans', sans-serif;font-size:16px;font-weight:400;letter-spacing:0px;">7</div>
<div style="position:absolute;left:63.05px;top:605.86px;line-height:1;white-space:pre;color:#333;font-family:'Liberation Sans', sans-serif;font-size:16px;font-weight:400;letter-spacing:0px;">8</div>
<div style="position:absolute;left:63.05px;top:651.86px;line-height:1;white-space:pre;color:#333;font-family:'Liberation Sans', sans-serif;font-size:16px;font-weight:400;letter-spacing:0px;">9</div>
<div style="position:absolute;left:58.60px;top:697.86px;line-height:1;white-space:pre;color:#333;font-family:'Liberation Sans', sans-serif;font-size:16px;font-weight:400;letter-spacing:0px;">10</div>
<div style="position:absolute;left:59.20px;top:743.86px;line-height:1;white-space:pre;color:#333;font-family:'Liberation Sans', sans-serif;font-size:16px;font-weight:400;letter-spacing:0px;">11</div>
<div style="position:absolute;left:58.60px;top:789.86px;line-height:1;white-space:pre;color:#333;font-family:'Liberation Sans', sans-serif;font-size:16px;font-weight:400;letter-spacing:0px;">12</div>
<div style="position:absolute;left:58.60px;top:835.86px;line-height:1;white-space:pre;color:#1e7145;font-family:'Liberation Sans', sans-serif;font-size:16px;font-weight:400;letter-spacing:0px;">13</div>
<div style="position:absolute;left:58.60px;top:859.86px;line-height:1;white-space:pre;color:#333;font-family:'Liberation Sans', sans-serif;font-size:16px;font-weight:400;letter-spacing:0px;">14</div>
<div style="position:absolute;left:58.60px;top:883.86px;line-height:1;white-space:pre;color:#333;font-family:'Liberation Sans', sans-serif;font-size:16px;font-weight:400;letter-spacing:0px;">15</div>
<div style="position:absolute;left:58.60px;top:907.86px;line-height:1;white-space:pre;color:#333;font-family:'Liberation Sans', sans-serif;font-size:16px;font-weight:400;letter-spacing:0px;">16</div>
<div style="position:absolute;left:58.60px;top:931.86px;line-height:1;white-space:pre;color:#333;font-family:'Liberation Sans', sans-serif;font-size:16px;font-weight:400;letter-spacing:0px;">17</div>
<div style="position:absolute;left:85px;top:357px;width:1046px;height:11px;background:#b4c6e7;"></div>
<div style="position:absolute;left:85px;top:368px;width:1046px;height:186px;background:#2f5597;"></div>
<div style="position:absolute;left:85px;top:554px;width:656px;height:46px;background:#d9e1f2;"></div>
<div style="position:absolute;left:741px;top:554px;width:339px;height:46px;background:#d9e1f2;"></div>
<div style="position:absolute;left:85px;top:624px;width:656px;height:230px;background:#d9e1f2;"></div>
<div style="position:absolute;left:741px;top:624px;width:339px;height:46px;background:#c6efce;"></div>
<div style="position:absolute;left:741px;top:670px;width:339px;height:46px;background:#ffc7ce;"></div>
<div style="position:absolute;left:741px;top:716px;width:339px;height:46px;background:#c6efce;"></div>
<div style="position:absolute;left:741px;top:762px;width:339px;height:46px;background:#c6efce;"></div>
<div style="position:absolute;left:741px;top:808px;width:339px;height:46px;background:#c6efce;"></div>
<div style="position:absolute;left:85px;top:670px;width:656px;height:1px;background:#c3c3c3;"></div>
<div style="position:absolute;left:85px;top:716px;width:656px;height:1px;background:#c3c3c3;"></div>
<div style="position:absolute;left:85px;top:762px;width:656px;height:1px;background:#c3c3c3;"></div>
<div style="position:absolute;left:85px;top:808px;width:656px;height:1px;background:#c3c3c3;"></div>
<div style="position:absolute;left:85px;top:854px;width:656px;height:1px;background:#c3c3c3;"></div>
<div style="position:absolute;left:165px;top:624px;width:1px;height:230px;background:#c3c3c3;"></div>
<div style="position:absolute;left:321px;top:624px;width:1px;height:230px;background:#c3c3c3;"></div>
<div style="position:absolute;left:477px;top:624px;width:1px;height:230px;background:#c3c3c3;"></div>
<div style="position:absolute;left:165px;top:854px;width:1px;height:24px;background:#d4d4d4;"></div>
<div style="position:absolute;left:321px;top:854px;width:1px;height:24px;background:#d4d4d4;"></div>
<div style="position:absolute;left:85px;top:392px;width:995px;height:1px;background:#000;"></div>
<div style="position:absolute;left:85px;top:416px;width:995px;height:1px;background:#000;"></div>
<div style="position:absolute;left:85px;top:554px;width:1047px;height:1px;background:#000;"></div>
<div style="position:absolute;left:85px;top:600px;width:1047px;height:1px;background:#000;"></div>
<div style="position:absolute;left:85px;top:624px;width:1047px;height:1px;background:#000;"></div>
<div style="position:absolute;left:741px;top:670px;width:391px;height:1px;background:#000;"></div>
<div style="position:absolute;left:741px;top:716px;width:391px;height:1px;background:#000;"></div>
<div style="position:absolute;left:741px;top:762px;width:391px;height:1px;background:#000;"></div>
<div style="position:absolute;left:741px;top:808px;width:391px;height:1px;background:#000;"></div>
<div style="position:absolute;left:741px;top:854px;width:391px;height:1px;background:#000;"></div>
<div style="position:absolute;left:321px;top:392px;width:1px;height:232px;background:#000;"></div>
<div style="position:absolute;left:477px;top:392px;width:1px;height:232px;background:#000;"></div>
<div style="position:absolute;left:741px;top:392px;width:1px;height:462px;background:#000;"></div>
<div style="position:absolute;left:165px;top:416px;width:1px;height:208px;background:#000;"></div>
<div style="position:absolute;left:1080px;top:368px;width:1px;height:486px;background:#000;"></div>
<div style="position:absolute;left:1131px;top:357px;width:1px;height:498px;background:#000;"></div>
<div style="position:absolute;left:85px;top:357px;width:80px;height:497px;overflow:hidden;">
<div style="position:absolute;left:1.00px;top:40.30px;line-height:1;white-space:pre;color:#ffffff;font-family:'Liberation Sans', sans-serif;font-size:15px;font-weight:700;letter-spacing:0px;">t</div>
<div style="position:absolute;left:-27.04px;top:64.30px;line-height:1;white-space:pre;color:#ffffff;font-family:'Liberation Sans', sans-serif;font-size:15px;font-weight:700;letter-spacing:0px;">Subsequent</div>
<div style="position:absolute;left:-7.50px;top:87.30px;line-height:1;white-space:pre;color:#ffffff;font-family:'Liberation Sans', sans-serif;font-size:15px;font-weight:700;letter-spacing:0px;">receipt</div>
<div style="position:absolute;left:1.40px;top:110.30px;line-height:1;white-space:pre;color:#ffffff;font-family:'Liberation Sans', sans-serif;font-size:15px;font-weight:700;letter-spacing:0px;transform:scaleX(1.0051);transform-origin:left 0;">date</div>
<div style="position:absolute;left:-36.15px;top:201.80px;line-height:1;white-space:pre;color:#000;font-family:'Liberation Sans', sans-serif;font-size:15px;font-weight:400;letter-spacing:0px;transform:scaleX(1.0201);transform-origin:right 0;">Manual Snipping</div>
<div style="position:absolute;left:-3.18px;top:248.50px;line-height:1;white-space:pre;color:#000;font-family:'Liberation Sans', sans-serif;font-size:15px;font-weight:400;letter-spacing:0px;transform:scaleX(1.0272);transform-origin:right 0;">per receipt</div>
<div style="position:absolute;left:2.13px;top:294.30px;line-height:1;white-space:pre;color:#3b4778;font-family:'Liberation Sans', sans-serif;font-size:15px;font-weight:400;letter-spacing:0px;transform:scaleX(1.1451);transform-origin:right 0;">19/11/2021</div>
<div style="position:absolute;left:2.13px;top:340.30px;line-height:1;white-space:pre;color:#3b4778;font-family:'Liberation Sans', sans-serif;font-size:15px;font-weight:400;letter-spacing:0px;transform:scaleX(1.1451);transform-origin:right 0;">20/11/2021</div>
<div style="position:absolute;left:2.13px;top:386.30px;line-height:1;white-space:pre;color:#3b4778;font-family:'Liberation Sans', sans-serif;font-size:15px;font-weight:400;letter-spacing:0px;transform:scaleX(1.1451);transform-origin:right 0;">21/11/2021</div>
<div style="position:absolute;left:2.13px;top:432.30px;line-height:1;white-space:pre;color:#3b4778;font-family:'Liberation Sans', sans-serif;font-size:15px;font-weight:400;letter-spacing:0px;transform:scaleX(1.1451);transform-origin:right 0;">22/11/2021</div>
<div style="position:absolute;left:2.13px;top:478.30px;line-height:1;white-space:pre;color:#3b4778;font-family:'Liberation Sans', sans-serif;font-size:15px;font-weight:400;letter-spacing:0px;transform:scaleX(1.1451);transform-origin:right 0;">23/11/2021</div>
</div>
<div style="position:absolute;left:1085.80px;top:373.10px;line-height:1;white-space:pre;color:#ffffff;font-family:'Liberation Sans', sans-serif;font-size:15px;font-weight:700;letter-spacing:0px;transform:scaleX(0.9883);transform-origin:left 0;">Notes</div>
<div style="position:absolute;left:344.15px;top:397.30px;line-height:1;white-space:pre;color:#ffffff;font-family:'Liberation Sans', sans-serif;font-size:15px;font-weight:700;letter-spacing:0px;transform:scaleX(1.0071);transform-origin:center 0;">Bank statement</div>
<div style="position:absolute;left:553.95px;top:397.30px;line-height:1;white-space:pre;color:#ffffff;font-family:'Liberation Sans', sans-serif;font-size:15px;font-weight:700;letter-spacing:0px;transform:scaleX(1.0062);transform-origin:center 0;">Bank statement</div>
<div style="position:absolute;left:870.16px;top:397.30px;line-height:1;white-space:pre;color:#ffffff;font-family:'Liberation Sans', sans-serif;font-size:15px;font-weight:700;letter-spacing:0px;transform:scaleX(0.9183);transform-origin:center 0;">Conclusion</div>
<div style="position:absolute;left:173.90px;top:420.80px;line-height:1;white-space:pre;color:#ffffff;font-family:'Liberation Sans', sans-serif;font-size:15px;font-weight:700;letter-spacing:0px;transform:scaleX(0.9906);transform-origin:left 0;">Subsequent receipt</div>
<div style="position:absolute;left:209.30px;top:443.80px;line-height:1;white-space:pre;color:#ffffff;font-family:'Liberation Sans', sans-serif;font-size:15px;font-weight:700;letter-spacing:0px;transform:scaleX(1.0111);transform-origin:left 0;">reference</div>
<div style="position:absolute;left:329.50px;top:420.80px;line-height:1;white-space:pre;color:#ffffff;font-family:'Liberation Sans', sans-serif;font-size:15px;font-weight:700;letter-spacing:0px;transform:scaleX(0.9813);transform-origin:left 0;">Reference Per Bank</div>
<div style="position:absolute;left:361.90px;top:443.80px;line-height:1;white-space:pre;color:#ffffff;font-family:'Liberation Sans', sans-serif;font-size:15px;font-weight:700;letter-spacing:0px;transform:scaleX(1.0327);transform-origin:left 0;">Statement</div>
<div style="position:absolute;left:487.50px;top:420.80px;line-height:1;white-space:pre;color:#ffffff;font-family:'Liberation Sans', sans-serif;font-size:15px;font-weight:700;letter-spacing:0px;transform:scaleX(0.9953);transform-origin:left 0;">Date of deposit into bank per bank</div>
<div style="position:absolute;left:573.40px;top:443.80px;line-height:1;white-space:pre;color:#ffffff;font-family:'Liberation Sans', sans-serif;font-size:15px;font-weight:700;letter-spacing:0px;transform:scaleX(1.0373);transform-origin:left 0;">statement</div>
<div style="position:absolute;left:776.60px;top:421.30px;line-height:1;white-space:pre;color:#ffffff;font-family:'Liberation Sans', sans-serif;font-size:15px;font-weight:700;letter-spacing:0px;transform:scaleX(0.9872);transform-origin:left 0;">Has the open account receivable been</div>
<div style="position:absolute;left:770.40px;top:444.30px;line-height:1;white-space:pre;color:#ffffff;font-family:'Liberation Sans', sans-serif;font-size:15px;font-weight:700;letter-spacing:0px;transform:scaleX(0.9814);transform-origin:left 0;">correctly included in the balance sheet?</div>
<div style="position:absolute;left:173.30px;top:558.80px;line-height:1;white-space:pre;color:#000;font-family:'Liberation Sans', sans-serif;font-size:15px;font-weight:400;letter-spacing:0px;transform:scaleX(1.0607);transform-origin:left 0;">Document Matching</div>
<div style="position:absolute;left:329.50px;top:558.80px;line-height:1;white-space:pre;color:#000;font-family:'Liberation Sans', sans-serif;font-size:15px;font-weight:400;letter-spacing:0px;transform:scaleX(1.0584);transform-origin:left 0;">Document Matching</div>
<div style="position:absolute;left:552.30px;top:558.80px;line-height:1;white-space:pre;color:#000;font-family:'Liberation Sans', sans-serif;font-size:15px;font-weight:400;letter-spacing:0px;transform:scaleX(1.0545);transform-origin:left 0;">Manual snipping</div>
<div style="position:absolute;left:829.00px;top:558.80px;line-height:1;white-space:pre;color:#000;font-family:'Liberation Sans', sans-serif;font-size:15px;font-weight:400;letter-spacing:0px;transform:scaleX(1.0398);transform-origin:left 0;">Professional judgement</div>
<div style="position:absolute;left:169.50px;top:605.50px;line-height:1;white-space:pre;color:#000;font-family:'Liberation Sans', sans-serif;font-size:15px;font-weight:400;letter-spacing:0px;transform:scaleX(1.0114);transform-origin:left 0;">Reference per receipt</div>
<div style="position:absolute;left:322px;top:600px;width:155px;height:24px;overflow:hidden;">
<div style="position:absolute;left:3.70px;top:5.50px;line-height:1;white-space:pre;color:#000;font-family:'Liberation Sans', sans-serif;font-size:15px;font-weight:400;letter-spacing:0px;">Reference Per Bank Statement</div>
</div>
<div style="position:absolute;left:481.00px;top:605.50px;line-height:1;white-space:pre;color:#000;font-family:'Liberation Sans', sans-serif;font-size:15px;font-weight:400;letter-spacing:0px;transform:scaleX(1.0566);transform-origin:left 0;">Date of deposit per bank statement.</div>
<div style="position:absolute;left:744.80px;top:605.50px;line-height:1;white-space:pre;color:#000;font-family:'Liberation Sans', sans-serif;font-size:15px;font-weight:400;letter-spacing:0px;transform:scaleX(1.0450);transform-origin:left 0;">Conclusion of test</div>
<div style="position:absolute;left:169.00px;top:651.30px;line-height:1;white-space:pre;color:#3b4778;font-family:'Liberation Sans', sans-serif;font-size:15px;font-weight:400;letter-spacing:0px;transform:scaleX(1.0270);transform-origin:left 0;">45453412XCZ</div>
<div style="position:absolute;left:325.40px;top:651.30px;line-height:1;white-space:pre;color:#3b4778;font-family:'Liberation Sans', sans-serif;font-size:15px;font-weight:400;letter-spacing:0px;transform:scaleX(1.0270);transform-origin:left 0;">45453412XCZ</div>
<div style="position:absolute;left:662.42px;top:651.30px;line-height:1;white-space:pre;color:#3b4778;font-family:'Liberation Sans', sans-serif;font-size:15px;font-weight:400;letter-spacing:0px;transform:scaleX(1.1388);transform-origin:right 0;">02/02/2022</div>
<div style="position:absolute;left:898.56px;top:628.55px;line-height:1;white-space:pre;color:#006100;font-family:'Liberation Sans', sans-serif;font-size:15px;font-weight:700;letter-spacing:0px;transform:scaleX(0.9507);transform-origin:center 0;">Yes</div>
<div style="position:absolute;left:169.00px;top:697.30px;line-height:1;white-space:pre;color:#3b4778;font-family:'Liberation Sans', sans-serif;font-size:15px;font-weight:400;letter-spacing:0px;transform:scaleX(1.0270);transform-origin:left 0;">2424315VVX</div>
<div style="position:absolute;left:325.40px;top:697.30px;line-height:1;white-space:pre;color:#3b4778;font-family:'Liberation Sans', sans-serif;font-size:15px;font-weight:400;letter-spacing:0px;transform:scaleX(1.0270);transform-origin:left 0;">2424315VVX</div>
<div style="position:absolute;left:662.42px;top:697.30px;line-height:1;white-space:pre;color:#3b4778;font-family:'Liberation Sans', sans-serif;font-size:15px;font-weight:400;letter-spacing:0px;transform:scaleX(1.1388);transform-origin:right 0;">30/12/2021</div>
<div style="position:absolute;left:901.50px;top:674.55px;line-height:1;white-space:pre;color:#9c0006;font-family:'Liberation Sans', sans-serif;font-size:15px;font-weight:700;letter-spacing:0px;transform:scaleX(0.9500);transform-origin:center 0;">No</div>
<div style="position:absolute;left:169.00px;top:743.30px;line-height:1;white-space:pre;color:#3b4778;font-family:'Liberation Sans', sans-serif;font-size:15px;font-weight:400;letter-spacing:0px;transform:scaleX(1.0270);transform-origin:left 0;">1515641XXZ</div>
<div style="position:absolute;left:325.40px;top:743.30px;line-height:1;white-space:pre;color:#3b4778;font-family:'Liberation Sans', sans-serif;font-size:15px;font-weight:400;letter-spacing:0px;transform:scaleX(1.0270);transform-origin:left 0;">1515641XXZ</div>
<div style="position:absolute;left:662.42px;top:743.30px;line-height:1;white-space:pre;color:#3b4778;font-family:'Liberation Sans', sans-serif;font-size:15px;font-weight:400;letter-spacing:0px;transform:scaleX(1.1388);transform-origin:right 0;">01/10/2022</div>
<div style="position:absolute;left:898.56px;top:720.55px;line-height:1;white-space:pre;color:#006100;font-family:'Liberation Sans', sans-serif;font-size:15px;font-weight:700;letter-spacing:0px;transform:scaleX(0.9507);transform-origin:center 0;">Yes</div>
<div style="position:absolute;left:169.00px;top:789.30px;line-height:1;white-space:pre;color:#3b4778;font-family:'Liberation Sans', sans-serif;font-size:15px;font-weight:400;letter-spacing:0px;transform:scaleX(1.0270);transform-origin:left 0;">3434241XXZ</div>
<div style="position:absolute;left:325.40px;top:789.30px;line-height:1;white-space:pre;color:#3b4778;font-family:'Liberation Sans', sans-serif;font-size:15px;font-weight:400;letter-spacing:0px;transform:scaleX(1.0270);transform-origin:left 0;">3434241XXZ</div>
<div style="position:absolute;left:662.42px;top:789.30px;line-height:1;white-space:pre;color:#3b4778;font-family:'Liberation Sans', sans-serif;font-size:15px;font-weight:400;letter-spacing:0px;transform:scaleX(1.1388);transform-origin:right 0;">01/03/2022</div>
<div style="position:absolute;left:898.56px;top:766.55px;line-height:1;white-space:pre;color:#006100;font-family:'Liberation Sans', sans-serif;font-size:15px;font-weight:700;letter-spacing:0px;transform:scaleX(0.9507);transform-origin:center 0;">Yes</div>
<div style="position:absolute;left:169.00px;top:835.30px;line-height:1;white-space:pre;color:#3b4778;font-family:'Liberation Sans', sans-serif;font-size:15px;font-weight:400;letter-spacing:0px;transform:scaleX(1.0270);transform-origin:left 0;">3434279XXC</div>
<div style="position:absolute;left:325.40px;top:835.30px;line-height:1;white-space:pre;color:#3b4778;font-family:'Liberation Sans', sans-serif;font-size:15px;font-weight:400;letter-spacing:0px;transform:scaleX(1.0270);transform-origin:left 0;">3434279XXC</div>
<div style="position:absolute;left:662.42px;top:835.30px;line-height:1;white-space:pre;color:#3b4778;font-family:'Liberation Sans', sans-serif;font-size:15px;font-weight:400;letter-spacing:0px;transform:scaleX(1.1388);transform-origin:right 0;">24/01/2022</div>
<div style="position:absolute;left:898.56px;top:812.55px;line-height:1;white-space:pre;color:#006100;font-family:'Liberation Sans', sans-serif;font-size:15px;font-weight:700;letter-spacing:0px;transform:scaleX(0.9507);transform-origin:center 0;">Yes</div>
<div style="position:absolute;left:740px;top:807px;width:342px;height:49px;box-sizing:border-box;border:2px solid #1e7145;"></div>
<div style="position:absolute;left:742px;top:809px;width:338px;height:1px;background:#fff;"></div>
<div style="position:absolute;left:1077px;top:851px;width:6px;height:6px;background:#1e7145;border:1px solid #fff;box-sizing:content-box;"></div>
<div style="position:absolute;left:1081px;top:832px;width:21px;height:21px;box-sizing:border-box;border:1px solid #b4b4b4;background:linear-gradient(#ffffff,#ececf0);"></div>
<svg style="position:absolute;left:1087px;top:840px;" width="9" height="5" viewBox="0 0 9 5"><path d="M0 0 H8 L4 4.5 Z" fill="#6a6a6a"/></svg>
<div style="position:absolute;left:741px;top:856px;width:341px;height:43px;box-sizing:border-box;border:1px solid #6e6e6e;border-top:none;background:#fff;"></div>
<div style="position:absolute;left:742px;top:856px;width:339px;height:21px;background:#d9d9d9;"></div>
<div style="position:absolute;left:748.40px;top:861.34px;line-height:1;white-space:pre;color:#1a1a1a;font-family:'Liberation Sans', sans-serif;font-size:12px;font-weight:400;letter-spacing:0px;transform:scaleX(0.9705);transform-origin:left 0;">Yes</div>
<div style="position:absolute;left:748.40px;top:882.24px;line-height:1;white-space:pre;color:#1a1a1a;font-family:'Liberation Sans', sans-serif;font-size:12px;font-weight:400;letter-spacing:0px;transform:scaleX(1.0428);transform-origin:left 0;">No</div>
<div style="position:absolute;left:1135px;top:334px;width:21px;height:618px;background:#f7f7f7;border-radius:10px;"></div>
<svg style="position:absolute;left:1140px;top:340px;" width="12" height="9" viewBox="0 0 12 9"><path d="M6 0.5 L11.5 8.5 H0.5 Z" fill="#6b6b6b" stroke="#6b6b6b" stroke-linejoin="round"/></svg>
<div style="position:absolute;left:1140px;top:412px;width:11px;height:465px;background:#717171;border-radius:6px;"></div>
<svg style="position:absolute;left:1140px;top:940px;" width="12" height="9" viewBox="0 0 12 9"><path d="M6 8.5 L11.5 0.5 H0.5 Z" fill="#6b6b6b" stroke="#6b6b6b" stroke-linejoin="round"/></svg>
<div style="position:absolute;left:1158px;top:334px;width:762px;height:658px;background:#f0f0f0;"></div>
<div style="position:absolute;left:1158px;top:334px;width:1px;height:658px;background:#d2d2d2;"></div>
<div style="position:absolute;left:1174.40px;top:352.39px;line-height:1;white-space:pre;color:#242424;font-family:'Liberation Sans', sans-serif;font-size:26px;font-weight:400;letter-spacing:0px;transform:scaleX(1.0087);transform-origin:left 0;">DataSnipper - Document Viewer</div>
<svg style="position:absolute;left:1843px;top:363px;" width="18" height="10" viewBox="0 0 18 10"><path d="M1 1 L9 9 L17 1" fill="none" stroke="#333" stroke-width="1.4"/></svg>
<svg style="position:absolute;left:1886px;top:361px;" width="13" height="13" viewBox="0 0 13 13"><path d="M0.5 0.5 L12.5 12.5 M12.5 0.5 L0.5 12.5" stroke="#333" stroke-width="1.4"/></svg>
<div style="position:absolute;left:1173px;top:390px;width:148px;height:37px;background:#fff;border-radius:6px;box-shadow:0 1px 1.5px rgba(0,0,0,0.16);"></div>
<div style="position:absolute;left:1184.40px;top:399.76px;line-height:1;white-space:pre;color:#242424;font-family:'Liberation Sans', sans-serif;font-size:18px;font-weight:400;letter-spacing:0px;transform:scaleX(0.9162);transform-origin:left 0;">Folders</div>
<svg style="position:absolute;left:1300px;top:405px;" width="13" height="8" viewBox="0 0 13 8"><path d="M0.5 0.5 L6.5 6.5 L12.5 0.5" fill="none" stroke="#444" stroke-width="1.2"/></svg>
<div style="position:absolute;left:1336px;top:390px;width:274px;height:37px;background:#fff;border-radius:6px;box-shadow:0 1px 1.5px rgba(0,0,0,0.16);"></div>
<div style="position:absolute;left:1346.40px;top:399.76px;line-height:1;white-space:pre;color:#242424;font-family:'Liberation Sans', sans-serif;font-size:18px;font-weight:400;letter-spacing:0px;transform:scaleX(0.9451);transform-origin:left 0;">Bank statement - Receipt...</div>
<svg style="position:absolute;left:1588px;top:405px;" width="13" height="8" viewBox="0 0 13 8"><path d="M0.5 0.5 L6.5 6.5 L12.5 0.5" fill="none" stroke="#444" stroke-width="1.2"/></svg>
<div style="position:absolute;left:1691.0px;top:406.5px;width:3px;height:3px;background:#333;border-radius:2px;"></div>
<div style="position:absolute;left:1698.0px;top:406.5px;width:3px;height:3px;background:#333;border-radius:2px;"></div>
<div style="position:absolute;left:1705.0px;top:406.5px;width:3px;height:3px;background:#333;border-radius:2px;"></div>
<div style="position:absolute;left:1731px;top:388px;width:174px;height:39px;box-sizing:border-box;background:#f7f7f7;border:1px solid #d0d0d0;border-bottom:1.5px solid #707070;border-radius:6px;"></div>
<div style="position:absolute;left:1744.00px;top:400.01px;line-height:1;white-space:pre;color:#242424;font-family:'Liberation Sans', sans-serif;font-size:17px;font-weight:400;letter-spacing:0px;transform:scaleX(0.8654);transform-origin:left 0;">Yes</div>
<svg style="position:absolute;left:1879px;top:399px;" width="19" height="19" viewBox="0 0 19 19"><circle cx="7.5" cy="7.5" r="6.5" fill="none" stroke="#333" stroke-width="1.3"/><path d="M12 12 L17.5 17.5" stroke="#333" stroke-width="1.4"/></svg>
<div style="position:absolute;left:1168px;top:435px;width:721px;height:526px;background:#e6e6e6;"></div>
<div style="position:absolute;left:1889px;top:435px;width:21px;height:526px;background:#ececec;"></div>
<svg style="position:absolute;left:1894px;top:442px;" width="10" height="6" viewBox="0 0 10 6"><path d="M1 5 L5 1 L9 5" fill="none" stroke="#777" stroke-width="1.3"/></svg>
<div style="position:absolute;left:1889px;top:518px;width:21px;height:36px;background:#cdcdcd;"></div>
<svg style="position:absolute;left:1894px;top:947px;" width="10" height="6" viewBox="0 0 10 6"><path d="M1 1 L5 5 L9 1" fill="none" stroke="#777" stroke-width="1.3"/></svg>
<div style="position:absolute;left:1168px;top:961px;width:721px;height:21px;background:#e8e8e8;"></div>
<svg style="position:absolute;left:1175px;top:967px;" width="6" height="10" viewBox="0 0 6 10"><path d="M5 1 L1 5 L5 9" fill="none" stroke="#aaa" stroke-width="1.2"/></svg>
<svg style="position:absolute;left:1876px;top:967px;" width="6" height="10" viewBox="0 0 6 10"><path d="M1 1 L5 5 L1 9" fill="none" stroke="#aaa" stroke-width="1.2"/></svg>
<div style="position:absolute;left:1183px;top:435px;width:690px;height:80px;box-sizing:border-box;background:#fff;border:1px solid #a6a6a6;border-top:none;"></div>
<div style="position:absolute;left:1183px;top:545px;width:690px;height:416px;overflow:hidden;background:#fff;box-sizing:border-box;border:1px solid #a6a6a6;border-bottom:none;">
<div style="position:absolute;left:61.30px;top:18.39px;line-height:1;white-space:pre;color:#000066;font-family:'Liberation Serif', serif;font-size:27px;font-weight:700;letter-spacing:1px;transform:scaleX(1.0978);transform-origin:left 0;">ING</div>
<svg style="position:absolute;left:125px;top:14px;" width="42" height="28" viewBox="0 0 42 28"><g fill="#ff6200">
<ellipse cx="13" cy="8.5" rx="8.5" ry="8.5"/>
<path d="M4 27 C4 21 8 16 14 15.5 L27 16.5 C32 17.5 35 21.5 35 27 Z"/>
<rect x="0.5" y="22.5" width="13" height="4.5" rx="2"/>
</g>
<path d="M33.5 24 C40 22 41.5 13 37 7" fill="none" stroke="#ff6200" stroke-width="2"/>
<circle cx="36" cy="6" r="2.2" fill="#ff6200"/>
<g fill="none" stroke="#fff" stroke-width=".8">
<path d="M10 6.5 L11.5 7 M14.5 7 L16 6.5 M11 11 Q13 12.5 15 11 M13 8 V10.5"/>
<path d="M8 13 C9 15 17 15 18 13"/>
<path d="M3 26 L5 24 M7 26 L9 24 M17 27 C17 23 20 21 23 21 M25 26 C25 23 27 21 30 21.5"/>
</g></svg>
<div style="position:absolute;left:450.60px;top:21.22px;line-height:1;white-space:pre;color:#1a1a1a;font-family:'Liberation Sans', sans-serif;font-size:21px;font-weight:400;letter-spacing:0px;transform:scaleX(1.0732);transform-origin:left 0;">Bank statement</div>
<svg style="position:absolute;left:627px;top:21px;" width="24" height="24" viewBox="0 0 24 24"><g fill="none" stroke="#e55b3c" stroke-width="1.3"><circle cx="11.5" cy="7" r="5.8"/><path d="M13.5 4.5 C12 3.5 9.5 4.2 9.5 7 C9.5 9.8 12 10.5 13.5 9.5 M8.3 6.2 H12 M8.3 7.8 H12"/><path d="M1.2 9 H21.5 V22.5 H1.2 Z"/><path d="M15 13.5 H22 V19.5 H15 Z"/></g><circle cx="17.5" cy="16.5" r="1" fill="#e55b3c"/></svg>
<div style="position:absolute;left:62px;top:129px;width:588px;height:1.6px;background:#8c8c8c;border-radius:3px 3px 0 0;"></div>
<svg style="position:absolute;left:60px;top:128px;" width="4" height="5" viewBox="0 0 4 5"><path d="M3.5 1 C2 1 1.5 2 1.5 4" fill="none" stroke="#8c8c8c" stroke-width="1.2"/></svg>
<svg style="position:absolute;left:648px;top:128px;" width="4" height="5" viewBox="0 0 4 5"><path d="M0.5 1 C2 1 2.5 2 2.5 4" fill="none" stroke="#8c8c8c" stroke-width="1.2"/></svg>
<div style="position:absolute;left:63.40px;top:135.02px;line-height:1;white-space:pre;color:#333;font-family:'Liberation Sans', sans-serif;font-size:8.6px;font-weight:400;letter-spacing:0px;transform:scaleX(1.0079);transform-origin:left 0;">Date</div>
<div style="position:absolute;left:133.70px;top:135.02px;line-height:1;white-space:pre;color:#333;font-family:'Liberation Sans', sans-serif;font-size:8.6px;font-weight:400;letter-spacing:0px;">N</div>
<div style="position:absolute;left:140.30px;top:136.71px;line-height:1;white-space:pre;color:#333;font-family:'Liberation Sans', sans-serif;font-size:6.6px;font-weight:400;letter-spacing:0px;transform:scaleX(0.9792);transform-origin:left 0;">AME</div>
<div style="position:absolute;left:155.50px;top:135.02px;line-height:1;white-space:pre;color:#333;font-family:'Liberation Sans', sans-serif;font-size:8.6px;font-weight:400;letter-spacing:0px;transform:scaleX(0.9505);transform-origin:left 0;">/ Description</div>
<div style="position:absolute;left:434.80px;top:135.02px;line-height:1;white-space:pre;color:#333;font-family:'Liberation Sans', sans-serif;font-size:8.6px;font-weight:400;letter-spacing:0px;transform:scaleX(1.0837);transform-origin:left 0;">Type</div>
<div style="position:absolute;left:601.30px;top:135.02px;line-height:1;white-space:pre;color:#333;font-family:'Liberation Sans', sans-serif;font-size:8.6px;font-weight:400;letter-spacing:0px;">A</div>
<div style="position:absolute;left:607.30px;top:136.71px;line-height:1;white-space:pre;color:#333;font-family:'Liberation Sans', sans-serif;font-size:6.6px;font-weight:400;letter-spacing:0px;transform:scaleX(0.8062);transform-origin:left 0;">MOUNT</div>
<div style="position:absolute;left:628.50px;top:135.02px;line-height:1;white-space:pre;color:#333;font-family:'Liberation Sans', sans-serif;font-size:8.6px;font-weight:400;letter-spacing:0px;transform:scaleX(0.8293);transform-origin:left 0;">(EUR)</div>
<div style="position:absolute;left:62px;top:157px;width:64px;height:12px;background:#9a9aff;"></div>
<div style="position:absolute;left:187px;top:168px;width:76px;height:16px;background:#9a9aff;"></div>
<div style="position:absolute;left:63.00px;top:157.59px;line-height:1;white-space:pre;color:#14143c;font-family:'Liberation Sans', sans-serif;font-size:9.7px;font-weight:400;letter-spacing:0.3px;transform:scaleX(1.1605);transform-origin:left 0;">02-02-2022</div>
<div style="position:absolute;left:133.70px;top:157.59px;line-height:1;white-space:pre;color:#0a0a0a;font-family:'Liberation Sans', sans-serif;font-size:9.7px;font-weight:700;letter-spacing:0.3px;transform:scaleX(0.9469);transform-origin:left 0;">BAGELS &amp; BEANS B.V.</div>
<div style="position:absolute;left:119.20px;top:172.39px;line-height:1;white-space:pre;color:#0a0a0a;font-family:'Liberation Sans', sans-serif;font-size:9.7px;font-weight:400;letter-spacing:0.3px;transform:scaleX(1.1270);transform-origin:left 0;">Payment ID:</div>
<div style="position:absolute;left:188.00px;top:172.39px;line-height:1;white-space:pre;color:#14143c;font-family:'Liberation Sans', sans-serif;font-size:9.7px;font-weight:400;letter-spacing:0.3px;transform:scaleX(1.1325);transform-origin:left 0;">45453412XCZ</div>
<div style="position:absolute;left:133.70px;top:185.69px;line-height:1;white-space:pre;color:#0a0a0a;font-family:'Liberation Sans', sans-serif;font-size:9.7px;font-weight:400;letter-spacing:0.3px;transform:scaleX(1.1164);transform-origin:left 0;">CCV nr. 38339KD</div>
<div style="position:absolute;left:133.70px;top:198.69px;line-height:1;white-space:pre;color:#0a0a0a;font-family:'Liberation Sans', sans-serif;font-size:9.7px;font-weight:400;letter-spacing:0.3px;transform:scaleX(1.1598);transform-origin:left 0;">Currency date: 20-02-2019</div>
<div style="position:absolute;left:439.80px;top:157.33px;line-height:1;white-space:pre;color:#222;font-family:'Liberation Sans', sans-serif;font-size:10px;font-weight:400;letter-spacing:0px;">O</div>
<div style="position:absolute;left:448.00px;top:159.37px;line-height:1;white-space:pre;color:#222;font-family:'Liberation Sans', sans-serif;font-size:7.6px;font-weight:400;letter-spacing:0px;">NLINE</div>
<div style="position:absolute;left:475.80px;top:157.33px;line-height:1;white-space:pre;color:#222;font-family:'Liberation Sans', sans-serif;font-size:10px;font-weight:400;letter-spacing:0px;">B</div>
<div style="position:absolute;left:482.30px;top:159.37px;line-height:1;white-space:pre;color:#222;font-family:'Liberation Sans', sans-serif;font-size:7.6px;font-weight:400;letter-spacing:0px;">ANKING</div>
<div style="position:absolute;left:628.24px;top:157.59px;line-height:1;white-space:pre;color:#1a1a1a;font-family:'Liberation Sans', sans-serif;font-size:9.7px;font-weight:700;letter-spacing:0.3px;transform:scaleX(1.0816);transform-origin:right 0;">5,10</div>
<div style="position:absolute;left:609.23px;top:243.79px;line-height:1;white-space:pre;color:#1a1a1a;font-family:'Liberation Sans', sans-serif;font-size:9.7px;font-weight:700;letter-spacing:0.3px;transform:scaleX(1.0600);transform-origin:right 0;">- 74,98</div>
<div style="position:absolute;left:616.73px;top:317.79px;line-height:1;white-space:pre;color:#1a1a1a;font-family:'Liberation Sans', sans-serif;font-size:9.7px;font-weight:700;letter-spacing:0.3px;transform:scaleX(1.0971);transform-origin:right 0;">- 25,90</div>
<div style="position:absolute;left:611.05px;top:391.79px;line-height:1;white-space:pre;color:#1a1a1a;font-family:'Liberation Sans', sans-serif;font-size:9.7px;font-weight:700;letter-spacing:0.3px;transform:scaleX(1.0329);transform-origin:right 0;">- 165,50</div>
<div style="position:absolute;left:133px;top:233px;width:517px;height:1px;background:#c8c8c8;"></div>
<div style="position:absolute;left:133px;top:307px;width:517px;height:1px;background:#c8c8c8;"></div>
<div style="position:absolute;left:133px;top:381.5px;width:517px;height:1px;background:#c8c8c8;"></div>
<div style="position:absolute;left:63.10px;top:243.79px;line-height:1;white-space:pre;color:#0a0a0a;font-family:'Liberation Sans', sans-serif;font-size:9.7px;font-weight:400;letter-spacing:0.3px;transform:scaleX(1.1605);transform-origin:left 0;">05-08-2021</div>
<div style="position:absolute;left:133.40px;top:243.79px;line-height:1;white-space:pre;color:#0a0a0a;font-family:'Liberation Sans', sans-serif;font-size:9.7px;font-weight:700;letter-spacing:0.3px;">LinkedIn</div>
<div style="position:absolute;left:133.40px;top:258.79px;line-height:1;white-space:pre;color:#0a0a0a;font-family:'Liberation Sans', sans-serif;font-size:9.7px;font-weight:400;letter-spacing:0.3px;transform:scaleX(1.1520);transform-origin:left 0;">Description: 53209276863</div>
<div style="position:absolute;left:133.40px;top:272.59px;line-height:1;white-space:pre;color:#0a0a0a;font-family:'Liberation Sans', sans-serif;font-size:9.7px;font-weight:400;letter-spacing:0.3px;transform:scaleX(1.1415);transform-origin:left 0;">IBAN: IE64IRCE92050112345678</div>
<div style="position:absolute;left:429.80px;top:243.53px;line-height:1;white-space:pre;color:#222;font-family:'Liberation Sans', sans-serif;font-size:10px;font-weight:400;letter-spacing:0px;">O</div>
<div style="position:absolute;left:438.00px;top:245.57px;line-height:1;white-space:pre;color:#222;font-family:'Liberation Sans', sans-serif;font-size:7.6px;font-weight:400;letter-spacing:0px;">NLINE</div>
<div style="position:absolute;left:465.80px;top:243.53px;line-height:1;white-space:pre;color:#222;font-family:'Liberation Sans', sans-serif;font-size:10px;font-weight:400;letter-spacing:0px;">B</div>
<div style="position:absolute;left:472.30px;top:245.57px;line-height:1;white-space:pre;color:#222;font-family:'Liberation Sans', sans-serif;font-size:7.6px;font-weight:400;letter-spacing:0px;">ANKING</div>
<div style="position:absolute;left:63.10px;top:317.79px;line-height:1;white-space:pre;color:#0a0a0a;font-family:'Liberation Sans', sans-serif;font-size:9.7px;font-weight:400;letter-spacing:0.3px;transform:scaleX(1.1605);transform-origin:left 0;">01-08-2021</div>
<div style="position:absolute;left:133.40px;top:317.79px;line-height:1;white-space:pre;color:#0a0a0a;font-family:'Liberation Sans', sans-serif;font-size:9.7px;font-weight:700;letter-spacing:0.3px;transform:scaleX(0.9246);transform-origin:left 0;">CCV*Pasta Pasta AMSTERDAM NLD</div>
<div style="position:absolute;left:133.40px;top:332.49px;line-height:1;white-space:pre;color:#0a0a0a;font-family:'Liberation Sans', sans-serif;font-size:9.7px;font-weight:400;letter-spacing:0.3px;transform:scaleX(1.1365);transform-origin:left 0;">Payment id: 82749449KJL</div>
<div style="position:absolute;left:133.40px;top:346.69px;line-height:1;white-space:pre;color:#0a0a0a;font-family:'Liberation Sans', sans-serif;font-size:9.7px;font-weight:400;letter-spacing:0.3px;transform:scaleX(1.1831);transform-origin:left 0;">Time: 15:19</div>
<div style="position:absolute;left:133.40px;top:360.59px;line-height:1;white-space:pre;color:#0a0a0a;font-family:'Liberation Sans', sans-serif;font-size:9.7px;font-weight:400;letter-spacing:0.3px;transform:scaleX(1.1598);transform-origin:left 0;">Currency date: 12-03-2019</div>
<div style="position:absolute;left:434.40px;top:317.54px;line-height:1;white-space:pre;color:#222;font-family:'Liberation Sans', sans-serif;font-size:10px;font-weight:400;letter-spacing:0px;">O</div>
<div style="position:absolute;left:442.60px;top:319.57px;line-height:1;white-space:pre;color:#222;font-family:'Liberation Sans', sans-serif;font-size:7.6px;font-weight:400;letter-spacing:0px;">NLINE</div>
<div style="position:absolute;left:470.40px;top:317.54px;line-height:1;white-space:pre;color:#222;font-family:'Liberation Sans', sans-serif;font-size:10px;font-weight:400;letter-spacing:0px;">B</div>
<div style="position:absolute;left:476.90px;top:319.57px;line-height:1;white-space:pre;color:#222;font-family:'Liberation Sans', sans-serif;font-size:7.6px;font-weight:400;letter-spacing:0px;">ANKING</div>
<div style="position:absolute;left:63.10px;top:391.79px;line-height:1;white-space:pre;color:#0a0a0a;font-family:'Liberation Sans', sans-serif;font-size:9.7px;font-weight:400;letter-spacing:0.3px;transform:scaleX(1.1605);transform-origin:left 0;">20-07-2021</div>
<div style="position:absolute;left:133.40px;top:391.79px;line-height:1;white-space:pre;color:#0a0a0a;font-family:'Liberation Sans', sans-serif;font-size:9.7px;font-weight:700;letter-spacing:0.3px;transform:scaleX(0.9859);transform-origin:left 0;">Restaurant Bella Italia</div>
<div style="position:absolute;left:133.40px;top:405.79px;line-height:1;white-space:pre;color:#0a0a0a;font-family:'Liberation Sans', sans-serif;font-size:9.7px;font-weight:400;letter-spacing:0.3px;transform:scaleX(1.1831);transform-origin:left 0;">Time: 22:19</div>
<div style="position:absolute;left:434.40px;top:391.54px;line-height:1;white-space:pre;color:#222;font-family:'Liberation Sans', sans-serif;font-size:10px;font-weight:400;letter-spacing:0px;">O</div>
<div style="position:absolute;left:442.60px;top:393.57px;line-height:1;white-space:pre;color:#222;font-family:'Liberation Sans', sans-serif;font-size:7.6px;font-weight:400;letter-spacing:0px;">NLINE</div>
<div style="position:absolute;left:470.40px;top:391.54px;line-height:1;white-space:pre;color:#222;font-family:'Liberation Sans', sans-serif;font-size:10px;font-weight:400;letter-spacing:0px;">B</div>
<div style="position:absolute;left:476.90px;top:393.57px;line-height:1;white-space:pre;color:#222;font-family:'Liberation Sans', sans-serif;font-size:7.6px;font-weight:400;letter-spacing:0px;">ANKING</div>
</div>
<div style="position:absolute;left:141px;top:952px;width:182px;height:40px;background:#e9ece9;"></div>
<div style="position:absolute;left:141px;top:952px;width:182px;height:35px;background:#fff;border-radius:0 0 8px 8px;"></div>
<div style="position:absolute;left:0px;top:952px;width:141px;height:40px;background:linear-gradient(90deg,#ebebe6 0%,#e9ece8 100%);border-top-right-radius:8px;"></div>
<div style="position:absolute;left:323px;top:952px;width:835px;height:40px;background:linear-gradient(90deg,#e6ecee 0%,#e4edf0 100%);border-top-left-radius:8px;"></div>
<svg style="position:absolute;left:31px;top:965px;" width="9" height="12" viewBox="0 0 9 12"><path d="M8 1 L2 6 L8 11" fill="none" stroke="#333" stroke-width="1.3"/></svg>
<svg style="position:absolute;left:72px;top:965px;" width="9" height="12" viewBox="0 0 9 12"><path d="M1 1 L7 6 L1 11" fill="none" stroke="#999" stroke-width="1.3"/></svg>
<div style="position:absolute;left:108.0px;top:969px;width:3px;height:3px;background:#333;border-radius:2px;"></div>
<div style="position:absolute;left:114.0px;top:969px;width:3px;height:3px;background:#333;border-radius:2px;"></div>
<div style="position:absolute;left:120.0px;top:969px;width:3px;height:3px;background:#333;border-radius:2px;"></div>
<div style="position:absolute;left:151.25px;top:960.81px;line-height:1;white-space:pre;color:#1a1a1a;font-family:'Liberation Sans', sans-serif;font-size:17px;font-weight:400;letter-spacing:0px;-webkit-text-stroke:0.45px #1a1a1a;transform:scaleX(1.0335);transform-origin:left 0;">Subsequent receipts</div>
<div style="position:absolute;left:151px;top:982px;width:161px;height:2.5px;background:#1e7145;border-radius:1px;"></div>
<div style="position:absolute;left:327px;top:960px;width:1px;height:24px;background:#c4c4c4;"></div>
<div style="position:absolute;left:345.80px;top:964.31px;line-height:1;white-space:pre;color:#262626;font-family:'Liberation Sans', sans-serif;font-size:17px;font-weight:400;letter-spacing:0px;transform:scaleX(0.9945);transform-origin:left 0;">DataSnipper</div>
<div style="position:absolute;left:456px;top:960px;width:1px;height:24px;background:#c4c4c4;"></div>
<svg style="position:absolute;left:509px;top:964px;" width="15" height="15" viewBox="0 0 15 15"><path d="M7.5 0 V15 M0 7.5 H15" stroke="#333" stroke-width="1.4"/></svg>
<div style="position:absolute;left:698px;top:965px;width:3px;height:3px;background:#222;"></div>
<div style="position:absolute;left:698px;top:970.5px;width:3px;height:3px;background:#222;"></div>
<div style="position:absolute;left:698px;top:976px;width:3px;height:3px;background:#222;"></div>
<div style="position:absolute;left:719px;top:961px;width:416px;height:21px;background:#f3f3f3;border-radius:10.5px;"></div>
<svg style="position:absolute;left:725px;top:965px;" width="10" height="12" viewBox="0 0 10 12"><path d="M9 0.5 V11.5 L1 6 Z" fill="#6b6b6b" stroke="#6b6b6b" stroke-linejoin="round"/></svg>
<div style="position:absolute;left:993px;top:966px;width:112px;height:11px;background:#6e6e6e;border-radius:6px;"></div>
<svg style="position:absolute;left:1120px;top:965px;" width="10" height="12" viewBox="0 0 10 12"><path d="M1 0.5 V11.5 L9 6 Z" fill="#6b6b6b" stroke="#6b6b6b" stroke-linejoin="round"/></svg>
<div style="position:absolute;left:0px;top:992px;width:1920px;height:26px;background:#f3f3f3;"></div>
<div style="position:absolute;left:0px;top:992px;width:1920px;height:1px;background:#e6e6e6;"></div>
<div style="position:absolute;left:9.50px;top:999.50px;line-height:1;white-space:pre;color:#333;font-family:'Liberation Sans', sans-serif;font-size:13px;font-weight:400;letter-spacing:0px;transform:scaleX(0.9447);transform-origin:left 0;">Ready</div>
<svg style="position:absolute;left:70px;top:997px;" width="20" height="19" viewBox="0 0 20 19"><g fill="none" stroke="#333" stroke-width="1.1"><circle cx="8" cy="2.5" r="2"/><path d="M1 5 C4 7 12 7 15 5 M8 7 V11 L4 17 M8 11 L10 13"/><path d="M11 12 L17 18 M17 12 L11 18"/></g></svg>
<div style="position:absolute;left:92.80px;top:999.50px;line-height:1;white-space:pre;color:#333;font-family:'Liberation Sans', sans-serif;font-size:13px;font-weight:400;letter-spacing:0px;transform:scaleX(0.9701);transform-origin:left 0;">Accessibility: Investigate</div>
<div style="position:absolute;left:1548px;top:992px;width:50px;height:26px;background:#e0e0e0;"></div>
<svg style="position:absolute;left:1564px;top:997px;" width="18" height="18" viewBox="0 0 18 18"><g fill="none" stroke="#333" stroke-width="1.3"><rect x="0.7" y="0.7" width="15.6" height="16"/><path d="M6 1 V17 M11 1 V17 M1 6 H16 M1 11.5 H16"/></g></svg>
<svg style="position:absolute;left:1614px;top:997px;" width="19" height="18" viewBox="0 0 19 18"><g fill="none" stroke="#333" stroke-width="1.3"><rect x="0.7" y="0.7" width="17" height="16"/><path d="M5 4 H14 V14 H5 Z M7 7 H12 M7 9.5 H12 M7 12 H12"/></g></svg>
<svg style="position:absolute;left:1664px;top:997px;" width="19" height="18" viewBox="0 0 19 18"><g fill="none" stroke="#333" stroke-width="1.3"><rect x="0.7" y="0.7" width="17" height="16"/><path d="M6 1 V8 H12 V1"/></g></svg>
<div style="position:absolute;left:1705px;top:1005px;width:9px;height:1.3px;background:#333;"></div>
<div style="position:absolute;left:1721px;top:1005px;width:125px;height:1px;background:#555;"></div>
<div style="position:absolute;left:1781px;top:999px;width:6px;height:14px;background:#5e5e5e;border-radius:1px;"></div>
<svg style="position:absolute;left:1852px;top:1000px;" width="10" height="10" viewBox="0 0 10 10"><path d="M5 0 V10 M0 5 H10" stroke="#333" stroke-width="1.2"/></svg>
<div style="position:absolute;left:1879.00px;top:1000.00px;line-height:1;white-space:pre;color:#444;font-family:'Liberation Sans', sans-serif;font-size:13px;font-weight:400;letter-spacing:0px;transform:scaleX(0.9023);transform-origin:left 0;">100%</div>
</body></html>
